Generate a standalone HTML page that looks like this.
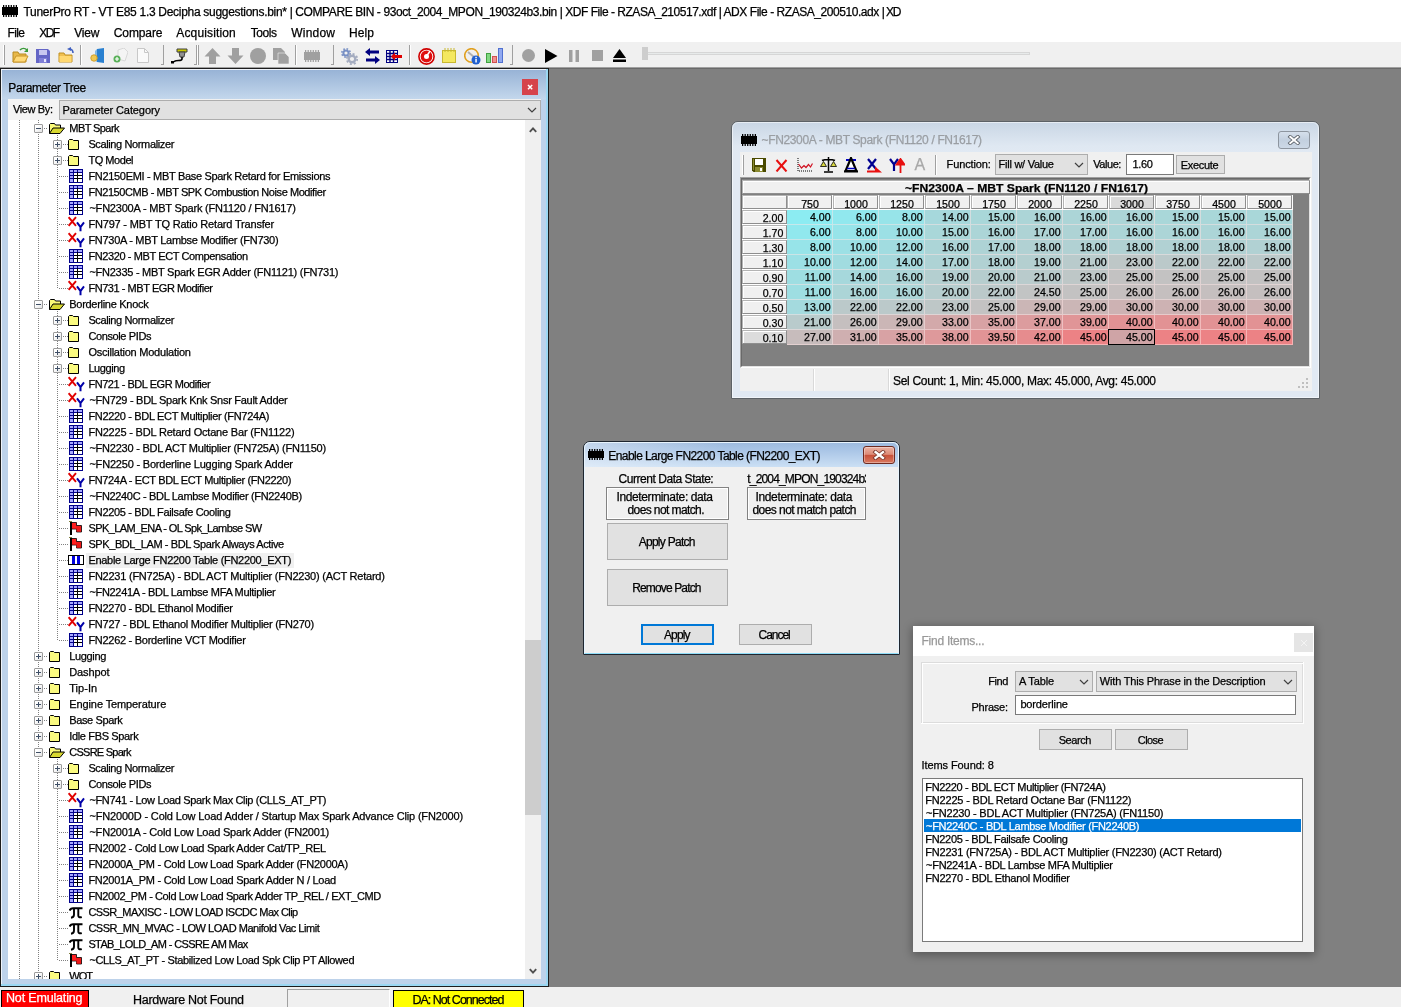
<!DOCTYPE html>
<html><head><meta charset="utf-8"><title>TunerPro RT</title><style>
html,body{margin:0;padding:0}
body{width:1401px;height:1007px;overflow:hidden;background:#808080;position:relative;font-family:"Liberation Sans",sans-serif;color:#000}
div,span,svg{position:absolute;box-sizing:border-box}
span{white-space:pre;line-height:16px;-webkit-text-stroke:.25px}
</style></head><body>
<div style="left:0;top:0;width:1401px;height:1007px;will-change:transform">
<div style="left:0px;top:0px;width:1401px;height:42px;background:#fff"></div>
<svg style="left:2px;top:5px" width="16" height="12" viewBox="0 0 16 12"><rect x="0" y="2" width="16" height="8" fill="#000"/><rect x="1.00" y="0" width="1.27" height="12" fill="#000"/><rect x="3.55" y="0" width="1.27" height="12" fill="#000"/><rect x="6.09" y="0" width="1.27" height="12" fill="#000"/><rect x="8.64" y="0" width="1.27" height="12" fill="#000"/><rect x="11.18" y="0" width="1.27" height="12" fill="#000"/><rect x="13.73" y="0" width="1.27" height="12" fill="#000"/></svg>
<span style="top:3.84px;font-size:12px;letter-spacing:-0.297px;left:23.50px;">TunerPro RT - VT E85 1.3 Decipha suggestions.bin* </span>
<span style="top:3.84px;font-size:12px;letter-spacing:-0.409px;left:289.70px;">| COMPARE BIN - 93oct_2004_MPON_190324b3.bin </span>
<span style="top:3.84px;font-size:12px;letter-spacing:-0.473px;left:559.70px;">| XDF File - RZASA_210517.xdf </span>
<span style="top:3.84px;font-size:12px;letter-spacing:-0.452px;left:718.70px;">| ADX File - RZASA_200510.adx </span>
<span style="top:3.84px;font-size:12px;letter-spacing:-1.108px;left:881.70px;">| XD</span>
<span style="top:24.84px;font-size:12px;letter-spacing:-0.615px;left:7.50px;">File</span>
<span style="top:24.84px;font-size:12px;letter-spacing:-1.650px;left:39.30px;">XDF</span>
<span style="top:24.84px;font-size:12px;letter-spacing:-0.266px;left:74.30px;">View</span>
<span style="top:24.84px;font-size:12px;letter-spacing:-0.110px;left:113.80px;">Compare</span>
<span style="top:24.84px;font-size:12px;letter-spacing:0.147px;left:176.30px;">Acquisition</span>
<span style="top:24.84px;font-size:12px;letter-spacing:-0.454px;left:250.80px;">Tools</span>
<span style="top:24.84px;font-size:12px;letter-spacing:0.202px;left:291.30px;">Window</span>
<span style="top:24.84px;font-size:12px;letter-spacing:0.104px;left:349.00px;">Help</span>
<div style="left:0px;top:42px;width:1401px;height:26px;background:#f0f0f0"></div>
<div style="left:3px;top:45px;width:1px;height:20px;background:#fff"></div>
<div style="left:4px;top:45px;width:1px;height:20px;background:#a0a0a0"></div>
<div style="left:80px;top:45px;width:1px;height:20px;background:#a0a0a0"></div>
<div style="left:81px;top:45px;width:1px;height:20px;background:#fff"></div>
<div style="left:163px;top:45px;width:1px;height:20px;background:#a0a0a0"></div>
<div style="left:161px;top:64px;width:3px;height:1px;background:#a0a0a0"></div>
<div style="left:196px;top:45px;width:1px;height:20px;background:#a0a0a0"></div>
<div style="left:194px;top:64px;width:3px;height:1px;background:#a0a0a0"></div>
<div style="left:197px;top:45px;width:1px;height:20px;background:#fff"></div>
<div style="left:198px;top:45px;width:1px;height:20px;background:#a0a0a0"></div>
<div style="left:295px;top:45px;width:1px;height:20px;background:#a0a0a0"></div>
<div style="left:296px;top:45px;width:1px;height:20px;background:#fff"></div>
<div style="left:333px;top:45px;width:1px;height:20px;background:#a0a0a0"></div>
<div style="left:331px;top:64px;width:3px;height:1px;background:#a0a0a0"></div>
<div style="left:409px;top:45px;width:1px;height:20px;background:#a0a0a0"></div>
<div style="left:410px;top:45px;width:1px;height:20px;background:#fff"></div>
<div style="left:512px;top:45px;width:1px;height:20px;background:#a0a0a0"></div>
<div style="left:510px;top:64px;width:3px;height:1px;background:#a0a0a0"></div>
<svg style="left:12px;top:47px" width="17" height="16" viewBox="0 0 17 16"><path d="M1 5h5l1 2h7v8H1z" fill="#e8b84a" stroke="#b88a20"/><path d="M1 15l3-6h12l-3 6z" fill="#ffd978" stroke="#c8962a"/><path d="M8 3c2-2 5-2 7 0" fill="none" stroke="#3a9a3a" stroke-width="1.6"/><path d="M16 1v4h-4z" fill="#3a9a3a"/></svg>
<svg style="left:36px;top:49px" width="14" height="14" viewBox="0 0 14 14"><path d="M0 0h12l2 2v12H0z" fill="#6466c6"/><rect x="3" y="1" width="8" height="5" fill="#c8c8f0"/><rect x="3" y="9" width="8" height="5" fill="#8080d8"/><rect x="8" y="10" width="2" height="3" fill="#e8e8ff"/></svg>
<svg style="left:58px;top:47px" width="17" height="16" viewBox="0 0 17 16"><path d="M1 6h5l1 2h7v7H1z" fill="#f0c050" stroke="#c09020"/><rect x="1.5" y="9" width="12" height="6" fill="#ffd870"/><path d="M11 2c2 0 4 1 4 4" fill="none" stroke="#4060c0" stroke-width="1.6"/><path d="M9 2l4-2v4z" fill="#4060c0"/></svg>
<svg style="left:90px;top:48px" width="15" height="15" viewBox="0 0 15 15"><path d="M7 1l7-1v15l-7-1z" fill="#2a80d0"/><path d="M7 1v13l-2-1V3z" fill="#80b8e8"/><circle cx="4" cy="10" r="3.2" fill="#f0c850" stroke="#d0a030"/></svg>
<svg style="left:113px;top:48px" width="15" height="15" viewBox="0 0 15 15"><path d="M5 2l6-2 4 4-3 9-7-2z" fill="#f4f4f4" stroke="#d8d8d8"/><circle cx="4" cy="11" r="3.5" fill="#58b058"/><path d="M4 9v4M2 11h4" stroke="#fff" stroke-width="1.2"/></svg>
<svg style="left:137px;top:48px" width="12" height="15" viewBox="0 0 12 15"><path d="M.5.5h7l4 4v10H.5z" fill="#fafafa" stroke="#c8c8c8"/><path d="M7.5.5v4h4" fill="none" stroke="#c8c8c8"/></svg>
<svg style="left:171px;top:47px" width="17" height="17" viewBox="0 0 17 17"><path d="M6 2h10v3H6z" fill="#c8c800" stroke="#404040"/><path d="M8 5h6l-1 5h-4z" fill="#909090" stroke="#404040"/><path d="M11 10v2c0 3-7 0-8 3" fill="none" stroke="#000" stroke-width="1.6"/><rect x="0" y="14" width="3" height="2.5" fill="#000"/></svg>
<svg style="left:204px;top:48px" width="17" height="16" viewBox="0 0 17 16"><path d="M8.5 0l8 8.5h-4.5V16h-7V8.500H.5z" fill="#a0a0a0"/></svg>
<svg style="left:227px;top:48px" width="17" height="16" viewBox="0 0 17 16"><path d="M8.5 16l8-8.500h-4.5V0h-7v7.500H.5z" fill="#a0a0a0"/></svg>
<svg style="left:250px;top:48px" width="16" height="16" viewBox="0 0 16 16"><circle cx="8" cy="8" r="8" fill="#a0a0a0"/></svg>
<svg style="left:273px;top:48px" width="16" height="16" viewBox="0 0 16 16"><path d="M0 0h8l4 4v8H0z" fill="#a0a0a0"/><path d="M5 5h7l4 4v7H5z" fill="#a0a0a0" stroke="#f0f0f0" stroke-width=".6"/></svg>
<svg style="left:304px;top:50px" width="16" height="12" viewBox="0 0 16 12"><rect x="0" y="2" width="16" height="8" fill="#a0a0a0"/><rect x="1.00" y="0" width="1.27" height="12" fill="#a0a0a0"/><rect x="3.55" y="0" width="1.27" height="12" fill="#a0a0a0"/><rect x="6.09" y="0" width="1.27" height="12" fill="#a0a0a0"/><rect x="8.64" y="0" width="1.27" height="12" fill="#a0a0a0"/><rect x="11.18" y="0" width="1.27" height="12" fill="#a0a0a0"/><rect x="13.73" y="0" width="1.27" height="12" fill="#a0a0a0"/></svg>
<svg style="left:341px;top:48px" width="17" height="17" viewBox="0 0 17 17"><circle cx="5" cy="5" r="2.600" fill="none" stroke="#7890c4" stroke-width="2"/><circle cx="5" cy="5" r="4.200" fill="none" stroke="#7890c4" stroke-width="1.600" stroke-dasharray="1.650 1.650"/><circle cx="11" cy="11" r="3.300" fill="none" stroke="#a4acc0" stroke-width="2.400"/><circle cx="11" cy="11" r="5.200" fill="none" stroke="#a4acc0" stroke-width="1.800" stroke-dasharray="2.040 2.040"/></svg>
<svg style="left:365px;top:48px" width="15" height="16" viewBox="0 0 15 16"><path d="M0 4l5-4v2.500h9v3H5V8z" fill="#000080"/><path d="M15 12l-5-4v2.500H1v3h9V16z" fill="#000080"/></svg>
<svg style="left:386px;top:50px" width="16" height="13" viewBox="0 0 16 13"><rect x=".5" y=".5" width="11" height="12" fill="#fff" stroke="#000080"/><path d="M1 3.500h10M1 6.500h10M1 9.500h10M4 1v11M7.500 1v11" stroke="#000080" stroke-width="1.4"/><path d="M5 6.500l4-4v2.500h7v3H9v2.500z" fill="#e00000"/></svg>
<svg style="left:418px;top:48px" width="17" height="17" viewBox="0 0 17 17"><circle cx="8.500" cy="8.500" r="7.600" fill="#fff" stroke="#d00000" stroke-width="1.6"/><circle cx="8.500" cy="8.500" r="4.200" fill="none" stroke="#e01010" stroke-width="3.400"/><path d="M8.500 8.500L12 3" stroke="#fff" stroke-width="1.500"/></svg>
<svg style="left:442px;top:48px" width="14" height="15" viewBox="0 0 14 15"><rect x=".5" y="2.500" width="13" height="12" fill="#f4e860" stroke="#c8b830"/><path d="M3 0v4M6 0v4M9 0v4M12 0v4" stroke="#c8b830"/></svg>
<svg style="left:464px;top:48px" width="17" height="17" viewBox="0 0 17 17"><circle cx="7.500" cy="7.500" r="6.800" fill="#f0f0f0" stroke="#e0a020" stroke-width="1.600"/><path d="M4 4l6 5" stroke="#b0b0b0" stroke-width="2"/><circle cx="12" cy="12" r="4.500" fill="#2060d0"/><rect x="11.300" y="10.800" width="1.500" height="3.700" fill="#fff"/><rect x="11.300" y="8.800" width="1.500" height="1.300" fill="#fff"/></svg>
<svg style="left:486px;top:48px" width="17" height="15" viewBox="0 0 17 15"><rect x=".5" y="5.500" width="4" height="9" fill="#80d880" stroke="#40a040"/><rect x="6.500" y="8.500" width="4" height="6" fill="#f09090" stroke="#d05050"/><rect x="12.500" y=".5" width="4" height="14" fill="#90a8f0" stroke="#5070d0"/></svg>
<svg style="left:522px;top:49px" width="13" height="13" viewBox="0 0 13 13"><circle cx="6.500" cy="6.500" r="6.500" fill="#a0a0a0"/></svg>
<svg style="left:545px;top:49px" width="13" height="14" viewBox="0 0 13 14"><path d="M0 0l12.500 7L0 14z" fill="#000"/></svg>
<svg style="left:569px;top:50px" width="10" height="12" viewBox="0 0 10 12"><rect x="0" y="0" width="3.500" height="12" fill="#a0a0a0"/><rect x="6.500" y="0" width="3.500" height="12" fill="#a0a0a0"/></svg>
<svg style="left:592px;top:50px" width="11" height="11" viewBox="0 0 11 11"><rect width="11" height="11" fill="#a0a0a0"/></svg>
<svg style="left:613px;top:49px" width="13" height="13" viewBox="0 0 13 13"><path d="M6.500 0l6.500 9H0z" fill="#000"/><rect x="0" y="10.500" width="13" height="2.500" fill="#000"/></svg>
<div style="left:647px;top:52px;width:383px;height:3px;background:#e7eaea;border:1px solid #d6d6d6"></div>
<div style="left:642px;top:47px;width:6px;height:13px;background:#cdcdcd"></div>
<div style="left:0px;top:68px;width:1401px;height:919px;background:#808080"></div>
<div style="left:0px;top:67px;width:1401px;height:1px;background:#a0a0a0"></div>
<div style="left:0px;top:68px;width:1401px;height:1px;background:#696969"></div>
<div style="left:0px;top:987px;width:1401px;height:20px;background:#f0f0f0"></div>
<div style="left:1px;top:990px;width:88px;height:18px;background:#ff0000;border:1px solid #000"></div>
<span style="top:990.17px;font-size:12.5px;letter-spacing:-0.168px;left:6.00px;color:#fff;">Not Emulating</span>
<span style="top:991.97px;font-size:12.5px;letter-spacing:-0.296px;left:133.00px;">Hardware Not Found</span>
<div style="left:287px;top:989px;width:103px;height:19px;border:1px solid #a0a0a0;border-right-color:#fff"></div>
<div style="left:393px;top:990px;width:131px;height:18px;background:#ffff00;border:1px solid #000"></div>
<span style="top:991.97px;font-size:12.5px;letter-spacing:-0.975px;left:412.40px;">DA: Not Connected</span>
<div style="left:0px;top:68px;width:549px;height:919px;background:#1c1c1c"></div>
<div style="left:1px;top:69px;width:547px;height:917px;background:#9bd7f2"></div>
<div style="left:1px;top:69px;width:545px;height:915px;background:#eef3fa"></div>
<div style="left:2px;top:70px;width:544px;height:914px;background:linear-gradient(#98b3d6 0,#c3d7ec 29px,#bdd2ea 30px)"></div>
<span style="top:79.64px;font-size:12px;letter-spacing:-0.413px;left:8.30px;">Parameter Tree</span>
<div style="left:522px;top:79px;width:16px;height:16px;background:#d6434b"></div>
<svg style="left:526px;top:83px" width="8" height="8" viewBox="0 0 8 8"><path d="M2 2l4.200 4.200M6.200 2L2 6.200" stroke="#fff" stroke-width="1.500"/></svg>
<div style="left:8px;top:99px;width:533px;height:21px;background:#f0f0f0"></div>
<div style="left:8px;top:99px;width:52px;height:21px;background:#f4f4f4"></div>
<span style="top:100.69px;font-size:11px;letter-spacing:-0.371px;left:13.00px;">View By:</span>
<div style="left:59px;top:100px;width:482px;height:20px;background:#e1e1e1;border:1px solid #adadad"></div>
<span style="top:101.69px;font-size:11px;letter-spacing:-0.091px;left:62.50px;">Parameter Category</span>
<svg style="left:527.2px;top:106.8px" width="10" height="7" viewBox="0 0 10 7"><path d="M1 1l4 4 4-4" fill="none" stroke="#404040" stroke-width="1.200"/></svg>
<div style="left:8px;top:120px;width:517px;height:859px;background:#fff"></div>
<div style="left:525px;top:120px;width:16px;height:859px;background:#f0f0f0"></div>
<svg style="left:528.5px;top:125.5px" width="8" height="7" viewBox="0 0 8 7"><path d="M.8 5.800l3.200-3.400 3.200 3.400" fill="none" stroke="#505050" stroke-width="1.900"/></svg>
<svg style="left:528.5px;top:967.5px" width="8" height="7" viewBox="0 0 8 7"><path d="M.8 1.200l3.200 3.400 3.200-3.400" fill="none" stroke="#505050" stroke-width="1.900"/></svg>
<div style="left:525px;top:640px;width:16px;height:175px;background:#cdcdcd"></div>
<div style="left:8px;top:120px;width:517px;height:859px;overflow:hidden">
<div style="left:11px;top:0px;width:1px;height:859px;background:repeating-linear-gradient(180deg,#808080 0,#808080 1px,transparent 1px,transparent 2px)"></div>
<div style="left:30px;top:0px;width:1px;height:857px;background:repeating-linear-gradient(180deg,#808080 0,#808080 1px,transparent 1px,transparent 2px)"></div>
<div style="left:49px;top:15px;width:1px;height:154px;background:repeating-linear-gradient(180deg,#808080 0,#808080 1px,transparent 1px,transparent 2px)"></div>
<div style="left:49px;top:191px;width:1px;height:330px;background:repeating-linear-gradient(180deg,#808080 0,#808080 1px,transparent 1px,transparent 2px)"></div>
<div style="left:49px;top:639px;width:1px;height:202px;background:repeating-linear-gradient(180deg,#808080 0,#808080 1px,transparent 1px,transparent 2px)"></div>
<div style="left:36px;top:8px;width:4px;height:1px;background:repeating-linear-gradient(90deg,#808080 0,#808080 1px,transparent 1px,transparent 2px)"></div>
<div style="left:26px;top:4px;width:9px;height:9px;background:linear-gradient(135deg,#fff 30%,#e2e2e2);border:1px solid #9b9b9b;border-radius:1px"></div>
<div style="left:28px;top:8px;width:5px;height:1px;background:#3f4f66"></div>
<svg style="left:41px;top:3px" width="16" height="12" viewBox="0 0 16 12"><path d="M.5 10.500v-9L1.500.5h4l1 1.500h5v3" fill="#fafa78" stroke="#000"/><path d="M.5 10.500L4 5h11.500L11 10.500z" fill="#d8d830" stroke="#000"/></svg>
<span style="top:0.19px;font-size:11px;letter-spacing:-0.577px;left:61.30px;">MBT Spark</span>
<div style="left:55px;top:24px;width:5px;height:1px;background:repeating-linear-gradient(90deg,#808080 0,#808080 1px,transparent 1px,transparent 2px)"></div>
<div style="left:45px;top:20px;width:9px;height:9px;background:linear-gradient(135deg,#fff 30%,#e2e2e2);border:1px solid #9b9b9b;border-radius:1px"></div>
<div style="left:47px;top:24px;width:5px;height:1px;background:#3f4f66"></div>
<div style="left:49px;top:22px;width:1px;height:5px;background:#3f4f66"></div>
<svg style="left:60px;top:19px" width="11" height="11" viewBox="0 0 11 11"><path d="M.5 1.500L1.500.5h3l1 1h5v9H.5z" fill="#fafa80" stroke="#000"/></svg>
<span style="top:16.19px;font-size:11px;letter-spacing:-0.377px;left:80.40px;">Scaling Normalizer</span>
<div style="left:55px;top:40px;width:5px;height:1px;background:repeating-linear-gradient(90deg,#808080 0,#808080 1px,transparent 1px,transparent 2px)"></div>
<div style="left:45px;top:36px;width:9px;height:9px;background:linear-gradient(135deg,#fff 30%,#e2e2e2);border:1px solid #9b9b9b;border-radius:1px"></div>
<div style="left:47px;top:40px;width:5px;height:1px;background:#3f4f66"></div>
<div style="left:49px;top:38px;width:1px;height:5px;background:#3f4f66"></div>
<svg style="left:60px;top:35px" width="11" height="11" viewBox="0 0 11 11"><path d="M.5 1.500L1.500.5h3l1 1h5v9H.5z" fill="#fafa80" stroke="#000"/></svg>
<span style="top:32.19px;font-size:11px;letter-spacing:-0.457px;left:80.40px;">TQ Model</span>
<div style="left:51px;top:56px;width:9px;height:1px;background:repeating-linear-gradient(90deg,#808080 0,#808080 1px,transparent 1px,transparent 2px)"></div>
<svg style="left:61px;top:49px" width="14" height="14" viewBox="0 0 14 14" shape-rendering="crispEdges"><rect width="14" height="14" fill="#00008b"/><rect x="1" y="1" width="3" height="2" fill="#a8a8ff"/><rect x="5" y="1" width="3" height="2" fill="#a8a8ff"/><rect x="9" y="1" width="4" height="2" fill="#a8a8ff"/><rect x="1" y="4" width="3" height="2" fill="#a8a8ff"/><rect x="5" y="4" width="3" height="2" fill="#fff"/><rect x="9" y="4" width="4" height="2" fill="#fff"/><rect x="1" y="7" width="3" height="2" fill="#a8a8ff"/><rect x="5" y="7" width="3" height="2" fill="#fff"/><rect x="9" y="7" width="4" height="2" fill="#fff"/><rect x="1" y="10" width="3" height="3" fill="#a8a8ff"/><rect x="5" y="10" width="3" height="3" fill="#fff"/><rect x="9" y="10" width="4" height="3" fill="#fff"/><rect x="8" y="3" width="1" height="10" fill="#000"/><rect x="5" y="6" width="8" height="1" fill="#000"/><rect x="5" y="9" width="8" height="1" fill="#000"/></svg>
<span style="top:48.19px;font-size:11px;letter-spacing:-0.314px;left:80.40px;">FN2150EMI - MBT Base Spark Retard for Emissions</span>
<div style="left:51px;top:72px;width:9px;height:1px;background:repeating-linear-gradient(90deg,#808080 0,#808080 1px,transparent 1px,transparent 2px)"></div>
<svg style="left:61px;top:65px" width="14" height="14" viewBox="0 0 14 14" shape-rendering="crispEdges"><rect width="14" height="14" fill="#00008b"/><rect x="1" y="1" width="3" height="2" fill="#a8a8ff"/><rect x="5" y="1" width="3" height="2" fill="#a8a8ff"/><rect x="9" y="1" width="4" height="2" fill="#a8a8ff"/><rect x="1" y="4" width="3" height="2" fill="#a8a8ff"/><rect x="5" y="4" width="3" height="2" fill="#fff"/><rect x="9" y="4" width="4" height="2" fill="#fff"/><rect x="1" y="7" width="3" height="2" fill="#a8a8ff"/><rect x="5" y="7" width="3" height="2" fill="#fff"/><rect x="9" y="7" width="4" height="2" fill="#fff"/><rect x="1" y="10" width="3" height="3" fill="#a8a8ff"/><rect x="5" y="10" width="3" height="3" fill="#fff"/><rect x="9" y="10" width="4" height="3" fill="#fff"/><rect x="8" y="3" width="1" height="10" fill="#000"/><rect x="5" y="6" width="8" height="1" fill="#000"/><rect x="5" y="9" width="8" height="1" fill="#000"/></svg>
<span style="top:64.19px;font-size:11px;letter-spacing:-0.429px;left:80.40px;">FN2150CMB - MBT SPK Combustion Noise Modifier</span>
<div style="left:51px;top:88px;width:9px;height:1px;background:repeating-linear-gradient(90deg,#808080 0,#808080 1px,transparent 1px,transparent 2px)"></div>
<svg style="left:61px;top:81px" width="14" height="14" viewBox="0 0 14 14" shape-rendering="crispEdges"><rect width="14" height="14" fill="#00008b"/><rect x="1" y="1" width="3" height="2" fill="#a8a8ff"/><rect x="5" y="1" width="3" height="2" fill="#a8a8ff"/><rect x="9" y="1" width="4" height="2" fill="#a8a8ff"/><rect x="1" y="4" width="3" height="2" fill="#a8a8ff"/><rect x="5" y="4" width="3" height="2" fill="#fff"/><rect x="9" y="4" width="4" height="2" fill="#fff"/><rect x="1" y="7" width="3" height="2" fill="#a8a8ff"/><rect x="5" y="7" width="3" height="2" fill="#fff"/><rect x="9" y="7" width="4" height="2" fill="#fff"/><rect x="1" y="10" width="3" height="3" fill="#a8a8ff"/><rect x="5" y="10" width="3" height="3" fill="#fff"/><rect x="9" y="10" width="4" height="3" fill="#fff"/><rect x="8" y="3" width="1" height="10" fill="#000"/><rect x="5" y="6" width="8" height="1" fill="#000"/><rect x="5" y="9" width="8" height="1" fill="#000"/></svg>
<span style="top:80.19px;font-size:11px;letter-spacing:-0.202px;left:81.40px;">~FN2300A - MBT Spark (FN1120 / FN1617)</span>
<div style="left:51px;top:104px;width:9px;height:1px;background:repeating-linear-gradient(90deg,#808080 0,#808080 1px,transparent 1px,transparent 2px)"></div>
<svg style="left:60px;top:96px" width="17" height="16" viewBox="0 0 17 16"><path d="M.6 1.200l7.400 8.600M8 1.200L.6 9.800" stroke="#e00000" stroke-width="1.900" fill="none"/><path d="M9 6.400l3.500 4.600L16 6.400M12.500 11v4.300" stroke="#0000a8" stroke-width="2" fill="none"/></svg>
<span style="top:96.19px;font-size:11px;letter-spacing:-0.182px;left:80.40px;">FN797 - MBT TQ Ratio Retard Transfer</span>
<div style="left:51px;top:120px;width:9px;height:1px;background:repeating-linear-gradient(90deg,#808080 0,#808080 1px,transparent 1px,transparent 2px)"></div>
<svg style="left:60px;top:112px" width="17" height="16" viewBox="0 0 17 16"><path d="M.6 1.200l7.400 8.600M8 1.200L.6 9.800" stroke="#e00000" stroke-width="1.900" fill="none"/><path d="M9 6.400l3.500 4.600L16 6.400M12.500 11v4.300" stroke="#0000a8" stroke-width="2" fill="none"/></svg>
<span style="top:112.19px;font-size:11px;letter-spacing:-0.289px;left:80.40px;">FN730A - MBT Lambse Modifier (FN730)</span>
<div style="left:51px;top:136px;width:9px;height:1px;background:repeating-linear-gradient(90deg,#808080 0,#808080 1px,transparent 1px,transparent 2px)"></div>
<svg style="left:61px;top:129px" width="14" height="14" viewBox="0 0 14 14" shape-rendering="crispEdges"><rect width="14" height="14" fill="#00008b"/><rect x="1" y="1" width="3" height="2" fill="#a8a8ff"/><rect x="5" y="1" width="3" height="2" fill="#a8a8ff"/><rect x="9" y="1" width="4" height="2" fill="#a8a8ff"/><rect x="1" y="4" width="3" height="2" fill="#a8a8ff"/><rect x="5" y="4" width="3" height="2" fill="#fff"/><rect x="9" y="4" width="4" height="2" fill="#fff"/><rect x="1" y="7" width="3" height="2" fill="#a8a8ff"/><rect x="5" y="7" width="3" height="2" fill="#fff"/><rect x="9" y="7" width="4" height="2" fill="#fff"/><rect x="1" y="10" width="3" height="3" fill="#a8a8ff"/><rect x="5" y="10" width="3" height="3" fill="#fff"/><rect x="9" y="10" width="4" height="3" fill="#fff"/><rect x="8" y="3" width="1" height="10" fill="#000"/><rect x="5" y="6" width="8" height="1" fill="#000"/><rect x="5" y="9" width="8" height="1" fill="#000"/></svg>
<span style="top:128.19px;font-size:11px;letter-spacing:-0.392px;left:80.40px;">FN2320 - MBT ECT Compensation</span>
<div style="left:51px;top:152px;width:9px;height:1px;background:repeating-linear-gradient(90deg,#808080 0,#808080 1px,transparent 1px,transparent 2px)"></div>
<svg style="left:61px;top:145px" width="14" height="14" viewBox="0 0 14 14" shape-rendering="crispEdges"><rect width="14" height="14" fill="#00008b"/><rect x="1" y="1" width="3" height="2" fill="#a8a8ff"/><rect x="5" y="1" width="3" height="2" fill="#a8a8ff"/><rect x="9" y="1" width="4" height="2" fill="#a8a8ff"/><rect x="1" y="4" width="3" height="2" fill="#a8a8ff"/><rect x="5" y="4" width="3" height="2" fill="#fff"/><rect x="9" y="4" width="4" height="2" fill="#fff"/><rect x="1" y="7" width="3" height="2" fill="#a8a8ff"/><rect x="5" y="7" width="3" height="2" fill="#fff"/><rect x="9" y="7" width="4" height="2" fill="#fff"/><rect x="1" y="10" width="3" height="3" fill="#a8a8ff"/><rect x="5" y="10" width="3" height="3" fill="#fff"/><rect x="9" y="10" width="4" height="3" fill="#fff"/><rect x="8" y="3" width="1" height="10" fill="#000"/><rect x="5" y="6" width="8" height="1" fill="#000"/><rect x="5" y="9" width="8" height="1" fill="#000"/></svg>
<span style="top:144.19px;font-size:11px;letter-spacing:-0.263px;left:81.40px;">~FN2335 - MBT Spark EGR Adder (FN1121) (FN731)</span>
<div style="left:51px;top:168px;width:9px;height:1px;background:repeating-linear-gradient(90deg,#808080 0,#808080 1px,transparent 1px,transparent 2px)"></div>
<svg style="left:60px;top:160px" width="17" height="16" viewBox="0 0 17 16"><path d="M.6 1.200l7.400 8.600M8 1.200L.6 9.800" stroke="#e00000" stroke-width="1.900" fill="none"/><path d="M9 6.400l3.500 4.600L16 6.400M12.500 11v4.300" stroke="#0000a8" stroke-width="2" fill="none"/></svg>
<span style="top:160.19px;font-size:11px;letter-spacing:-0.447px;left:80.40px;">FN731 - MBT EGR Modifier</span>
<div style="left:36px;top:184px;width:4px;height:1px;background:repeating-linear-gradient(90deg,#808080 0,#808080 1px,transparent 1px,transparent 2px)"></div>
<div style="left:26px;top:180px;width:9px;height:9px;background:linear-gradient(135deg,#fff 30%,#e2e2e2);border:1px solid #9b9b9b;border-radius:1px"></div>
<div style="left:28px;top:184px;width:5px;height:1px;background:#3f4f66"></div>
<svg style="left:41px;top:179px" width="16" height="12" viewBox="0 0 16 12"><path d="M.5 10.500v-9L1.500.5h4l1 1.500h5v3" fill="#fafa78" stroke="#000"/><path d="M.5 10.500L4 5h11.500L11 10.500z" fill="#d8d830" stroke="#000"/></svg>
<span style="top:176.19px;font-size:11px;letter-spacing:-0.292px;left:61.30px;">Borderline Knock</span>
<div style="left:55px;top:200px;width:5px;height:1px;background:repeating-linear-gradient(90deg,#808080 0,#808080 1px,transparent 1px,transparent 2px)"></div>
<div style="left:45px;top:196px;width:9px;height:9px;background:linear-gradient(135deg,#fff 30%,#e2e2e2);border:1px solid #9b9b9b;border-radius:1px"></div>
<div style="left:47px;top:200px;width:5px;height:1px;background:#3f4f66"></div>
<div style="left:49px;top:198px;width:1px;height:5px;background:#3f4f66"></div>
<svg style="left:60px;top:195px" width="11" height="11" viewBox="0 0 11 11"><path d="M.5 1.500L1.500.5h3l1 1h5v9H.5z" fill="#fafa80" stroke="#000"/></svg>
<span style="top:192.19px;font-size:11px;letter-spacing:-0.377px;left:80.40px;">Scaling Normalizer</span>
<div style="left:55px;top:216px;width:5px;height:1px;background:repeating-linear-gradient(90deg,#808080 0,#808080 1px,transparent 1px,transparent 2px)"></div>
<div style="left:45px;top:212px;width:9px;height:9px;background:linear-gradient(135deg,#fff 30%,#e2e2e2);border:1px solid #9b9b9b;border-radius:1px"></div>
<div style="left:47px;top:216px;width:5px;height:1px;background:#3f4f66"></div>
<div style="left:49px;top:214px;width:1px;height:5px;background:#3f4f66"></div>
<svg style="left:60px;top:211px" width="11" height="11" viewBox="0 0 11 11"><path d="M.5 1.500L1.500.5h3l1 1h5v9H.5z" fill="#fafa80" stroke="#000"/></svg>
<span style="top:208.19px;font-size:11px;letter-spacing:-0.379px;left:80.40px;">Console PIDs</span>
<div style="left:55px;top:232px;width:5px;height:1px;background:repeating-linear-gradient(90deg,#808080 0,#808080 1px,transparent 1px,transparent 2px)"></div>
<div style="left:45px;top:228px;width:9px;height:9px;background:linear-gradient(135deg,#fff 30%,#e2e2e2);border:1px solid #9b9b9b;border-radius:1px"></div>
<div style="left:47px;top:232px;width:5px;height:1px;background:#3f4f66"></div>
<div style="left:49px;top:230px;width:1px;height:5px;background:#3f4f66"></div>
<svg style="left:60px;top:227px" width="11" height="11" viewBox="0 0 11 11"><path d="M.5 1.500L1.500.5h3l1 1h5v9H.5z" fill="#fafa80" stroke="#000"/></svg>
<span style="top:224.19px;font-size:11px;letter-spacing:-0.239px;left:80.40px;">Oscillation Modulation</span>
<div style="left:55px;top:248px;width:5px;height:1px;background:repeating-linear-gradient(90deg,#808080 0,#808080 1px,transparent 1px,transparent 2px)"></div>
<div style="left:45px;top:244px;width:9px;height:9px;background:linear-gradient(135deg,#fff 30%,#e2e2e2);border:1px solid #9b9b9b;border-radius:1px"></div>
<div style="left:47px;top:248px;width:5px;height:1px;background:#3f4f66"></div>
<div style="left:49px;top:246px;width:1px;height:5px;background:#3f4f66"></div>
<svg style="left:60px;top:243px" width="11" height="11" viewBox="0 0 11 11"><path d="M.5 1.500L1.500.5h3l1 1h5v9H.5z" fill="#fafa80" stroke="#000"/></svg>
<span style="top:240.19px;font-size:11px;letter-spacing:-0.409px;left:80.40px;">Lugging</span>
<div style="left:51px;top:264px;width:9px;height:1px;background:repeating-linear-gradient(90deg,#808080 0,#808080 1px,transparent 1px,transparent 2px)"></div>
<svg style="left:60px;top:256px" width="17" height="16" viewBox="0 0 17 16"><path d="M.6 1.200l7.400 8.600M8 1.200L.6 9.800" stroke="#e00000" stroke-width="1.900" fill="none"/><path d="M9 6.400l3.500 4.600L16 6.400M12.500 11v4.300" stroke="#0000a8" stroke-width="2" fill="none"/></svg>
<span style="top:256.19px;font-size:11px;letter-spacing:-0.463px;left:80.40px;">FN721 - BDL EGR Modifier</span>
<div style="left:51px;top:280px;width:9px;height:1px;background:repeating-linear-gradient(90deg,#808080 0,#808080 1px,transparent 1px,transparent 2px)"></div>
<svg style="left:60px;top:272px" width="17" height="16" viewBox="0 0 17 16"><path d="M.6 1.200l7.400 8.600M8 1.200L.6 9.800" stroke="#e00000" stroke-width="1.900" fill="none"/><path d="M9 6.400l3.500 4.600L16 6.400M12.500 11v4.300" stroke="#0000a8" stroke-width="2" fill="none"/></svg>
<span style="top:272.19px;font-size:11px;letter-spacing:-0.279px;left:81.40px;">~FN729 - BDL Spark Knk Snsr Fault Adder</span>
<div style="left:51px;top:296px;width:9px;height:1px;background:repeating-linear-gradient(90deg,#808080 0,#808080 1px,transparent 1px,transparent 2px)"></div>
<svg style="left:61px;top:289px" width="14" height="14" viewBox="0 0 14 14" shape-rendering="crispEdges"><rect width="14" height="14" fill="#00008b"/><rect x="1" y="1" width="3" height="2" fill="#a8a8ff"/><rect x="5" y="1" width="3" height="2" fill="#a8a8ff"/><rect x="9" y="1" width="4" height="2" fill="#a8a8ff"/><rect x="1" y="4" width="3" height="2" fill="#a8a8ff"/><rect x="5" y="4" width="3" height="2" fill="#fff"/><rect x="9" y="4" width="4" height="2" fill="#fff"/><rect x="1" y="7" width="3" height="2" fill="#a8a8ff"/><rect x="5" y="7" width="3" height="2" fill="#fff"/><rect x="9" y="7" width="4" height="2" fill="#fff"/><rect x="1" y="10" width="3" height="3" fill="#a8a8ff"/><rect x="5" y="10" width="3" height="3" fill="#fff"/><rect x="9" y="10" width="4" height="3" fill="#fff"/><rect x="8" y="3" width="1" height="10" fill="#000"/><rect x="5" y="6" width="8" height="1" fill="#000"/><rect x="5" y="9" width="8" height="1" fill="#000"/></svg>
<span style="top:288.19px;font-size:11px;letter-spacing:-0.330px;left:80.40px;">FN2220 - BDL ECT Multiplier (FN724A)</span>
<div style="left:51px;top:312px;width:9px;height:1px;background:repeating-linear-gradient(90deg,#808080 0,#808080 1px,transparent 1px,transparent 2px)"></div>
<svg style="left:61px;top:305px" width="14" height="14" viewBox="0 0 14 14" shape-rendering="crispEdges"><rect width="14" height="14" fill="#00008b"/><rect x="1" y="1" width="3" height="2" fill="#a8a8ff"/><rect x="5" y="1" width="3" height="2" fill="#a8a8ff"/><rect x="9" y="1" width="4" height="2" fill="#a8a8ff"/><rect x="1" y="4" width="3" height="2" fill="#a8a8ff"/><rect x="5" y="4" width="3" height="2" fill="#fff"/><rect x="9" y="4" width="4" height="2" fill="#fff"/><rect x="1" y="7" width="3" height="2" fill="#a8a8ff"/><rect x="5" y="7" width="3" height="2" fill="#fff"/><rect x="9" y="7" width="4" height="2" fill="#fff"/><rect x="1" y="10" width="3" height="3" fill="#a8a8ff"/><rect x="5" y="10" width="3" height="3" fill="#fff"/><rect x="9" y="10" width="4" height="3" fill="#fff"/><rect x="8" y="3" width="1" height="10" fill="#000"/><rect x="5" y="6" width="8" height="1" fill="#000"/><rect x="5" y="9" width="8" height="1" fill="#000"/></svg>
<span style="top:304.19px;font-size:11px;letter-spacing:-0.189px;left:80.40px;">FN2225 - BDL Retard Octane Bar (FN1122)</span>
<div style="left:51px;top:328px;width:9px;height:1px;background:repeating-linear-gradient(90deg,#808080 0,#808080 1px,transparent 1px,transparent 2px)"></div>
<svg style="left:61px;top:321px" width="14" height="14" viewBox="0 0 14 14" shape-rendering="crispEdges"><rect width="14" height="14" fill="#00008b"/><rect x="1" y="1" width="3" height="2" fill="#a8a8ff"/><rect x="5" y="1" width="3" height="2" fill="#a8a8ff"/><rect x="9" y="1" width="4" height="2" fill="#a8a8ff"/><rect x="1" y="4" width="3" height="2" fill="#a8a8ff"/><rect x="5" y="4" width="3" height="2" fill="#fff"/><rect x="9" y="4" width="4" height="2" fill="#fff"/><rect x="1" y="7" width="3" height="2" fill="#a8a8ff"/><rect x="5" y="7" width="3" height="2" fill="#fff"/><rect x="9" y="7" width="4" height="2" fill="#fff"/><rect x="1" y="10" width="3" height="3" fill="#a8a8ff"/><rect x="5" y="10" width="3" height="3" fill="#fff"/><rect x="9" y="10" width="4" height="3" fill="#fff"/><rect x="8" y="3" width="1" height="10" fill="#000"/><rect x="5" y="6" width="8" height="1" fill="#000"/><rect x="5" y="9" width="8" height="1" fill="#000"/></svg>
<span style="top:320.19px;font-size:11px;letter-spacing:-0.231px;left:81.40px;">~FN2230 - BDL ACT Multiplier (FN725A) (FN1150)</span>
<div style="left:51px;top:344px;width:9px;height:1px;background:repeating-linear-gradient(90deg,#808080 0,#808080 1px,transparent 1px,transparent 2px)"></div>
<svg style="left:61px;top:337px" width="14" height="14" viewBox="0 0 14 14" shape-rendering="crispEdges"><rect width="14" height="14" fill="#00008b"/><rect x="1" y="1" width="3" height="2" fill="#a8a8ff"/><rect x="5" y="1" width="3" height="2" fill="#a8a8ff"/><rect x="9" y="1" width="4" height="2" fill="#a8a8ff"/><rect x="1" y="4" width="3" height="2" fill="#a8a8ff"/><rect x="5" y="4" width="3" height="2" fill="#fff"/><rect x="9" y="4" width="4" height="2" fill="#fff"/><rect x="1" y="7" width="3" height="2" fill="#a8a8ff"/><rect x="5" y="7" width="3" height="2" fill="#fff"/><rect x="9" y="7" width="4" height="2" fill="#fff"/><rect x="1" y="10" width="3" height="3" fill="#a8a8ff"/><rect x="5" y="10" width="3" height="3" fill="#fff"/><rect x="9" y="10" width="4" height="3" fill="#fff"/><rect x="8" y="3" width="1" height="10" fill="#000"/><rect x="5" y="6" width="8" height="1" fill="#000"/><rect x="5" y="9" width="8" height="1" fill="#000"/></svg>
<span style="top:336.19px;font-size:11px;letter-spacing:-0.197px;left:81.40px;">~FN2250 - Borderline Lugging Spark Adder</span>
<div style="left:51px;top:360px;width:9px;height:1px;background:repeating-linear-gradient(90deg,#808080 0,#808080 1px,transparent 1px,transparent 2px)"></div>
<svg style="left:60px;top:352px" width="17" height="16" viewBox="0 0 17 16"><path d="M.6 1.200l7.400 8.600M8 1.200L.6 9.800" stroke="#e00000" stroke-width="1.900" fill="none"/><path d="M9 6.400l3.500 4.600L16 6.400M12.500 11v4.300" stroke="#0000a8" stroke-width="2" fill="none"/></svg>
<span style="top:352.19px;font-size:11px;letter-spacing:-0.354px;left:80.40px;">FN724A - ECT BDL ECT Multiplier (FN2220)</span>
<div style="left:51px;top:376px;width:9px;height:1px;background:repeating-linear-gradient(90deg,#808080 0,#808080 1px,transparent 1px,transparent 2px)"></div>
<svg style="left:61px;top:369px" width="14" height="14" viewBox="0 0 14 14" shape-rendering="crispEdges"><rect width="14" height="14" fill="#00008b"/><rect x="1" y="1" width="3" height="2" fill="#a8a8ff"/><rect x="5" y="1" width="3" height="2" fill="#a8a8ff"/><rect x="9" y="1" width="4" height="2" fill="#a8a8ff"/><rect x="1" y="4" width="3" height="2" fill="#a8a8ff"/><rect x="5" y="4" width="3" height="2" fill="#fff"/><rect x="9" y="4" width="4" height="2" fill="#fff"/><rect x="1" y="7" width="3" height="2" fill="#a8a8ff"/><rect x="5" y="7" width="3" height="2" fill="#fff"/><rect x="9" y="7" width="4" height="2" fill="#fff"/><rect x="1" y="10" width="3" height="3" fill="#a8a8ff"/><rect x="5" y="10" width="3" height="3" fill="#fff"/><rect x="9" y="10" width="4" height="3" fill="#fff"/><rect x="8" y="3" width="1" height="10" fill="#000"/><rect x="5" y="6" width="8" height="1" fill="#000"/><rect x="5" y="9" width="8" height="1" fill="#000"/></svg>
<span style="top:368.19px;font-size:11px;letter-spacing:-0.326px;left:81.40px;">~FN2240C - BDL Lambse Modifier (FN2240B)</span>
<div style="left:51px;top:392px;width:9px;height:1px;background:repeating-linear-gradient(90deg,#808080 0,#808080 1px,transparent 1px,transparent 2px)"></div>
<svg style="left:61px;top:385px" width="14" height="14" viewBox="0 0 14 14" shape-rendering="crispEdges"><rect width="14" height="14" fill="#00008b"/><rect x="1" y="1" width="3" height="2" fill="#a8a8ff"/><rect x="5" y="1" width="3" height="2" fill="#a8a8ff"/><rect x="9" y="1" width="4" height="2" fill="#a8a8ff"/><rect x="1" y="4" width="3" height="2" fill="#a8a8ff"/><rect x="5" y="4" width="3" height="2" fill="#fff"/><rect x="9" y="4" width="4" height="2" fill="#fff"/><rect x="1" y="7" width="3" height="2" fill="#a8a8ff"/><rect x="5" y="7" width="3" height="2" fill="#fff"/><rect x="9" y="7" width="4" height="2" fill="#fff"/><rect x="1" y="10" width="3" height="3" fill="#a8a8ff"/><rect x="5" y="10" width="3" height="3" fill="#fff"/><rect x="9" y="10" width="4" height="3" fill="#fff"/><rect x="8" y="3" width="1" height="10" fill="#000"/><rect x="5" y="6" width="8" height="1" fill="#000"/><rect x="5" y="9" width="8" height="1" fill="#000"/></svg>
<span style="top:384.19px;font-size:11px;letter-spacing:-0.330px;left:80.40px;">FN2205 - BDL Failsafe Cooling</span>
<div style="left:51px;top:408px;width:9px;height:1px;background:repeating-linear-gradient(90deg,#808080 0,#808080 1px,transparent 1px,transparent 2px)"></div>
<svg style="left:61px;top:401px" width="14" height="14" viewBox="0 0 14 14"><rect x="0" y="0" width="3" height="1" fill="#808040"/><rect x="1" y="1" width="2" height="13" fill="#000"/><path d="M3 1.500h4.500v3h5v6.500h-5v-3H3z" fill="#f01818" stroke="#000" stroke-width=".8"/><rect x="3" y="2" width="4" height="5.500" fill="#ff2020"/><rect x="7.500" y="5" width="4.500" height="5.500" fill="#ee1818"/></svg>
<span style="top:400.19px;font-size:11px;letter-spacing:-0.591px;left:80.40px;">SPK_LAM_ENA - OL Spk_Lambse SW</span>
<div style="left:51px;top:424px;width:9px;height:1px;background:repeating-linear-gradient(90deg,#808080 0,#808080 1px,transparent 1px,transparent 2px)"></div>
<svg style="left:61px;top:417px" width="14" height="14" viewBox="0 0 14 14"><rect x="0" y="0" width="3" height="1" fill="#808040"/><rect x="1" y="1" width="2" height="13" fill="#000"/><path d="M3 1.500h4.500v3h5v6.500h-5v-3H3z" fill="#f01818" stroke="#000" stroke-width=".8"/><rect x="3" y="2" width="4" height="5.500" fill="#ff2020"/><rect x="7.500" y="5" width="4.500" height="5.500" fill="#ee1818"/></svg>
<span style="top:416.19px;font-size:11px;letter-spacing:-0.409px;left:80.40px;">SPK_BDL_LAM - BDL Spark Always Active</span>
<div style="left:51px;top:440px;width:9px;height:1px;background:repeating-linear-gradient(90deg,#808080 0,#808080 1px,transparent 1px,transparent 2px)"></div>
<svg style="left:60px;top:435px" width="16" height="10" viewBox="0 0 16 10" shape-rendering="crispEdges"><rect x="0" y="0" width="16" height="10" fill="#000"/><rect x="1" y="1" width="14" height="8" fill="#fff"/><rect x="4" y="1" width="3" height="8" fill="#0000e0"/><rect x="9" y="1" width="3" height="8" fill="#0000e0"/></svg>
<div style="left:78px;top:433px;width:208.39999999999998px;height:15px;background:#f0f0f0"></div>
<span style="top:432.19px;font-size:11px;letter-spacing:-0.292px;left:80.40px;">Enable Large FN2200 Table (FN2200_EXT)</span>
<div style="left:51px;top:456px;width:9px;height:1px;background:repeating-linear-gradient(90deg,#808080 0,#808080 1px,transparent 1px,transparent 2px)"></div>
<svg style="left:61px;top:449px" width="14" height="14" viewBox="0 0 14 14" shape-rendering="crispEdges"><rect width="14" height="14" fill="#00008b"/><rect x="1" y="1" width="3" height="2" fill="#a8a8ff"/><rect x="5" y="1" width="3" height="2" fill="#a8a8ff"/><rect x="9" y="1" width="4" height="2" fill="#a8a8ff"/><rect x="1" y="4" width="3" height="2" fill="#a8a8ff"/><rect x="5" y="4" width="3" height="2" fill="#fff"/><rect x="9" y="4" width="4" height="2" fill="#fff"/><rect x="1" y="7" width="3" height="2" fill="#a8a8ff"/><rect x="5" y="7" width="3" height="2" fill="#fff"/><rect x="9" y="7" width="4" height="2" fill="#fff"/><rect x="1" y="10" width="3" height="3" fill="#a8a8ff"/><rect x="5" y="10" width="3" height="3" fill="#fff"/><rect x="9" y="10" width="4" height="3" fill="#fff"/><rect x="8" y="3" width="1" height="10" fill="#000"/><rect x="5" y="6" width="8" height="1" fill="#000"/><rect x="5" y="9" width="8" height="1" fill="#000"/></svg>
<span style="top:448.19px;font-size:11px;letter-spacing:-0.232px;left:80.40px;">FN2231 (FN725A) - BDL ACT Multiplier (FN2230) (ACT Retard)</span>
<div style="left:51px;top:472px;width:9px;height:1px;background:repeating-linear-gradient(90deg,#808080 0,#808080 1px,transparent 1px,transparent 2px)"></div>
<svg style="left:61px;top:465px" width="14" height="14" viewBox="0 0 14 14" shape-rendering="crispEdges"><rect width="14" height="14" fill="#00008b"/><rect x="1" y="1" width="3" height="2" fill="#a8a8ff"/><rect x="5" y="1" width="3" height="2" fill="#a8a8ff"/><rect x="9" y="1" width="4" height="2" fill="#a8a8ff"/><rect x="1" y="4" width="3" height="2" fill="#a8a8ff"/><rect x="5" y="4" width="3" height="2" fill="#fff"/><rect x="9" y="4" width="4" height="2" fill="#fff"/><rect x="1" y="7" width="3" height="2" fill="#a8a8ff"/><rect x="5" y="7" width="3" height="2" fill="#fff"/><rect x="9" y="7" width="4" height="2" fill="#fff"/><rect x="1" y="10" width="3" height="3" fill="#a8a8ff"/><rect x="5" y="10" width="3" height="3" fill="#fff"/><rect x="9" y="10" width="4" height="3" fill="#fff"/><rect x="8" y="3" width="1" height="10" fill="#000"/><rect x="5" y="6" width="8" height="1" fill="#000"/><rect x="5" y="9" width="8" height="1" fill="#000"/></svg>
<span style="top:464.19px;font-size:11px;letter-spacing:-0.314px;left:81.40px;">~FN2241A - BDL Lambse MFA Multiplier</span>
<div style="left:51px;top:488px;width:9px;height:1px;background:repeating-linear-gradient(90deg,#808080 0,#808080 1px,transparent 1px,transparent 2px)"></div>
<svg style="left:61px;top:481px" width="14" height="14" viewBox="0 0 14 14" shape-rendering="crispEdges"><rect width="14" height="14" fill="#00008b"/><rect x="1" y="1" width="3" height="2" fill="#a8a8ff"/><rect x="5" y="1" width="3" height="2" fill="#a8a8ff"/><rect x="9" y="1" width="4" height="2" fill="#a8a8ff"/><rect x="1" y="4" width="3" height="2" fill="#a8a8ff"/><rect x="5" y="4" width="3" height="2" fill="#fff"/><rect x="9" y="4" width="4" height="2" fill="#fff"/><rect x="1" y="7" width="3" height="2" fill="#a8a8ff"/><rect x="5" y="7" width="3" height="2" fill="#fff"/><rect x="9" y="7" width="4" height="2" fill="#fff"/><rect x="1" y="10" width="3" height="3" fill="#a8a8ff"/><rect x="5" y="10" width="3" height="3" fill="#fff"/><rect x="9" y="10" width="4" height="3" fill="#fff"/><rect x="8" y="3" width="1" height="10" fill="#000"/><rect x="5" y="6" width="8" height="1" fill="#000"/><rect x="5" y="9" width="8" height="1" fill="#000"/></svg>
<span style="top:480.19px;font-size:11px;letter-spacing:-0.280px;left:80.40px;">FN2270 - BDL Ethanol Modifier</span>
<div style="left:51px;top:504px;width:9px;height:1px;background:repeating-linear-gradient(90deg,#808080 0,#808080 1px,transparent 1px,transparent 2px)"></div>
<svg style="left:60px;top:496px" width="17" height="16" viewBox="0 0 17 16"><path d="M.6 1.200l7.400 8.600M8 1.200L.6 9.800" stroke="#e00000" stroke-width="1.900" fill="none"/><path d="M9 6.400l3.500 4.600L16 6.400M12.500 11v4.300" stroke="#0000a8" stroke-width="2" fill="none"/></svg>
<span style="top:496.19px;font-size:11px;letter-spacing:-0.241px;left:80.40px;">FN727 - BDL Ethanol Modifier Multiplier (FN270)</span>
<div style="left:51px;top:520px;width:9px;height:1px;background:repeating-linear-gradient(90deg,#808080 0,#808080 1px,transparent 1px,transparent 2px)"></div>
<svg style="left:61px;top:513px" width="14" height="14" viewBox="0 0 14 14" shape-rendering="crispEdges"><rect width="14" height="14" fill="#00008b"/><rect x="1" y="1" width="3" height="2" fill="#a8a8ff"/><rect x="5" y="1" width="3" height="2" fill="#a8a8ff"/><rect x="9" y="1" width="4" height="2" fill="#a8a8ff"/><rect x="1" y="4" width="3" height="2" fill="#a8a8ff"/><rect x="5" y="4" width="3" height="2" fill="#fff"/><rect x="9" y="4" width="4" height="2" fill="#fff"/><rect x="1" y="7" width="3" height="2" fill="#a8a8ff"/><rect x="5" y="7" width="3" height="2" fill="#fff"/><rect x="9" y="7" width="4" height="2" fill="#fff"/><rect x="1" y="10" width="3" height="3" fill="#a8a8ff"/><rect x="5" y="10" width="3" height="3" fill="#fff"/><rect x="9" y="10" width="4" height="3" fill="#fff"/><rect x="8" y="3" width="1" height="10" fill="#000"/><rect x="5" y="6" width="8" height="1" fill="#000"/><rect x="5" y="9" width="8" height="1" fill="#000"/></svg>
<span style="top:512.19px;font-size:11px;letter-spacing:-0.280px;left:80.40px;">FN2262 - Borderline VCT Modifier</span>
<div style="left:36px;top:536px;width:4px;height:1px;background:repeating-linear-gradient(90deg,#808080 0,#808080 1px,transparent 1px,transparent 2px)"></div>
<div style="left:26px;top:532px;width:9px;height:9px;background:linear-gradient(135deg,#fff 30%,#e2e2e2);border:1px solid #9b9b9b;border-radius:1px"></div>
<div style="left:28px;top:536px;width:5px;height:1px;background:#3f4f66"></div>
<div style="left:30px;top:534px;width:1px;height:5px;background:#3f4f66"></div>
<svg style="left:41px;top:531px" width="11" height="11" viewBox="0 0 11 11"><path d="M.5 1.500L1.500.5h3l1 1h5v9H.5z" fill="#fafa80" stroke="#000"/></svg>
<span style="top:528.19px;font-size:11px;letter-spacing:-0.359px;left:61.30px;">Lugging</span>
<div style="left:36px;top:552px;width:4px;height:1px;background:repeating-linear-gradient(90deg,#808080 0,#808080 1px,transparent 1px,transparent 2px)"></div>
<div style="left:26px;top:548px;width:9px;height:9px;background:linear-gradient(135deg,#fff 30%,#e2e2e2);border:1px solid #9b9b9b;border-radius:1px"></div>
<div style="left:28px;top:552px;width:5px;height:1px;background:#3f4f66"></div>
<div style="left:30px;top:550px;width:1px;height:5px;background:#3f4f66"></div>
<svg style="left:41px;top:547px" width="11" height="11" viewBox="0 0 11 11"><path d="M.5 1.500L1.500.5h3l1 1h5v9H.5z" fill="#fafa80" stroke="#000"/></svg>
<span style="top:544.19px;font-size:11px;letter-spacing:-0.131px;left:61.30px;">Dashpot</span>
<div style="left:36px;top:568px;width:4px;height:1px;background:repeating-linear-gradient(90deg,#808080 0,#808080 1px,transparent 1px,transparent 2px)"></div>
<div style="left:26px;top:564px;width:9px;height:9px;background:linear-gradient(135deg,#fff 30%,#e2e2e2);border:1px solid #9b9b9b;border-radius:1px"></div>
<div style="left:28px;top:568px;width:5px;height:1px;background:#3f4f66"></div>
<div style="left:30px;top:566px;width:1px;height:5px;background:#3f4f66"></div>
<svg style="left:41px;top:563px" width="11" height="11" viewBox="0 0 11 11"><path d="M.5 1.500L1.500.5h3l1 1h5v9H.5z" fill="#fafa80" stroke="#000"/></svg>
<span style="top:560.19px;font-size:11px;letter-spacing:0.016px;left:61.30px;">Tip-In</span>
<div style="left:36px;top:584px;width:4px;height:1px;background:repeating-linear-gradient(90deg,#808080 0,#808080 1px,transparent 1px,transparent 2px)"></div>
<div style="left:26px;top:580px;width:9px;height:9px;background:linear-gradient(135deg,#fff 30%,#e2e2e2);border:1px solid #9b9b9b;border-radius:1px"></div>
<div style="left:28px;top:584px;width:5px;height:1px;background:#3f4f66"></div>
<div style="left:30px;top:582px;width:1px;height:5px;background:#3f4f66"></div>
<svg style="left:41px;top:579px" width="11" height="11" viewBox="0 0 11 11"><path d="M.5 1.500L1.500.5h3l1 1h5v9H.5z" fill="#fafa80" stroke="#000"/></svg>
<span style="top:576.19px;font-size:11px;letter-spacing:-0.110px;left:61.30px;">Engine Temperature</span>
<div style="left:36px;top:600px;width:4px;height:1px;background:repeating-linear-gradient(90deg,#808080 0,#808080 1px,transparent 1px,transparent 2px)"></div>
<div style="left:26px;top:596px;width:9px;height:9px;background:linear-gradient(135deg,#fff 30%,#e2e2e2);border:1px solid #9b9b9b;border-radius:1px"></div>
<div style="left:28px;top:600px;width:5px;height:1px;background:#3f4f66"></div>
<div style="left:30px;top:598px;width:1px;height:5px;background:#3f4f66"></div>
<svg style="left:41px;top:595px" width="11" height="11" viewBox="0 0 11 11"><path d="M.5 1.500L1.500.5h3l1 1h5v9H.5z" fill="#fafa80" stroke="#000"/></svg>
<span style="top:592.19px;font-size:11px;letter-spacing:-0.386px;left:61.30px;">Base Spark</span>
<div style="left:36px;top:616px;width:4px;height:1px;background:repeating-linear-gradient(90deg,#808080 0,#808080 1px,transparent 1px,transparent 2px)"></div>
<div style="left:26px;top:612px;width:9px;height:9px;background:linear-gradient(135deg,#fff 30%,#e2e2e2);border:1px solid #9b9b9b;border-radius:1px"></div>
<div style="left:28px;top:616px;width:5px;height:1px;background:#3f4f66"></div>
<div style="left:30px;top:614px;width:1px;height:5px;background:#3f4f66"></div>
<svg style="left:41px;top:611px" width="11" height="11" viewBox="0 0 11 11"><path d="M.5 1.500L1.500.5h3l1 1h5v9H.5z" fill="#fafa80" stroke="#000"/></svg>
<span style="top:608.19px;font-size:11px;letter-spacing:-0.353px;left:61.30px;">Idle FBS Spark</span>
<div style="left:36px;top:632px;width:4px;height:1px;background:repeating-linear-gradient(90deg,#808080 0,#808080 1px,transparent 1px,transparent 2px)"></div>
<div style="left:26px;top:628px;width:9px;height:9px;background:linear-gradient(135deg,#fff 30%,#e2e2e2);border:1px solid #9b9b9b;border-radius:1px"></div>
<div style="left:28px;top:632px;width:5px;height:1px;background:#3f4f66"></div>
<svg style="left:41px;top:627px" width="16" height="12" viewBox="0 0 16 12"><path d="M.5 10.500v-9L1.500.5h4l1 1.500h5v3" fill="#fafa78" stroke="#000"/><path d="M.5 10.500L4 5h11.500L11 10.500z" fill="#d8d830" stroke="#000"/></svg>
<span style="top:624.19px;font-size:11px;letter-spacing:-0.750px;left:61.30px;">CSSRE Spark</span>
<div style="left:55px;top:648px;width:5px;height:1px;background:repeating-linear-gradient(90deg,#808080 0,#808080 1px,transparent 1px,transparent 2px)"></div>
<div style="left:45px;top:644px;width:9px;height:9px;background:linear-gradient(135deg,#fff 30%,#e2e2e2);border:1px solid #9b9b9b;border-radius:1px"></div>
<div style="left:47px;top:648px;width:5px;height:1px;background:#3f4f66"></div>
<div style="left:49px;top:646px;width:1px;height:5px;background:#3f4f66"></div>
<svg style="left:60px;top:643px" width="11" height="11" viewBox="0 0 11 11"><path d="M.5 1.500L1.500.5h3l1 1h5v9H.5z" fill="#fafa80" stroke="#000"/></svg>
<span style="top:640.19px;font-size:11px;letter-spacing:-0.377px;left:80.40px;">Scaling Normalizer</span>
<div style="left:55px;top:664px;width:5px;height:1px;background:repeating-linear-gradient(90deg,#808080 0,#808080 1px,transparent 1px,transparent 2px)"></div>
<div style="left:45px;top:660px;width:9px;height:9px;background:linear-gradient(135deg,#fff 30%,#e2e2e2);border:1px solid #9b9b9b;border-radius:1px"></div>
<div style="left:47px;top:664px;width:5px;height:1px;background:#3f4f66"></div>
<div style="left:49px;top:662px;width:1px;height:5px;background:#3f4f66"></div>
<svg style="left:60px;top:659px" width="11" height="11" viewBox="0 0 11 11"><path d="M.5 1.500L1.500.5h3l1 1h5v9H.5z" fill="#fafa80" stroke="#000"/></svg>
<span style="top:656.19px;font-size:11px;letter-spacing:-0.379px;left:80.40px;">Console PIDs</span>
<div style="left:51px;top:680px;width:9px;height:1px;background:repeating-linear-gradient(90deg,#808080 0,#808080 1px,transparent 1px,transparent 2px)"></div>
<svg style="left:60px;top:672px" width="17" height="16" viewBox="0 0 17 16"><path d="M.6 1.200l7.400 8.600M8 1.200L.6 9.800" stroke="#e00000" stroke-width="1.900" fill="none"/><path d="M9 6.400l3.500 4.600L16 6.400M12.500 11v4.300" stroke="#0000a8" stroke-width="2" fill="none"/></svg>
<span style="top:672.19px;font-size:11px;letter-spacing:-0.339px;left:81.40px;">~FN741 - Low Load Spark Max Clip (CLLS_AT_PT)</span>
<div style="left:51px;top:696px;width:9px;height:1px;background:repeating-linear-gradient(90deg,#808080 0,#808080 1px,transparent 1px,transparent 2px)"></div>
<svg style="left:61px;top:689px" width="14" height="14" viewBox="0 0 14 14" shape-rendering="crispEdges"><rect width="14" height="14" fill="#00008b"/><rect x="1" y="1" width="3" height="2" fill="#a8a8ff"/><rect x="5" y="1" width="3" height="2" fill="#a8a8ff"/><rect x="9" y="1" width="4" height="2" fill="#a8a8ff"/><rect x="1" y="4" width="3" height="2" fill="#a8a8ff"/><rect x="5" y="4" width="3" height="2" fill="#fff"/><rect x="9" y="4" width="4" height="2" fill="#fff"/><rect x="1" y="7" width="3" height="2" fill="#a8a8ff"/><rect x="5" y="7" width="3" height="2" fill="#fff"/><rect x="9" y="7" width="4" height="2" fill="#fff"/><rect x="1" y="10" width="3" height="3" fill="#a8a8ff"/><rect x="5" y="10" width="3" height="3" fill="#fff"/><rect x="9" y="10" width="4" height="3" fill="#fff"/><rect x="8" y="3" width="1" height="10" fill="#000"/><rect x="5" y="6" width="8" height="1" fill="#000"/><rect x="5" y="9" width="8" height="1" fill="#000"/></svg>
<span style="top:688.19px;font-size:11px;letter-spacing:-0.165px;left:81.40px;">~FN2000D - Cold Low Load Adder / Startup Max Spark Advance Clip (FN2000)</span>
<div style="left:51px;top:712px;width:9px;height:1px;background:repeating-linear-gradient(90deg,#808080 0,#808080 1px,transparent 1px,transparent 2px)"></div>
<svg style="left:61px;top:705px" width="14" height="14" viewBox="0 0 14 14" shape-rendering="crispEdges"><rect width="14" height="14" fill="#00008b"/><rect x="1" y="1" width="3" height="2" fill="#a8a8ff"/><rect x="5" y="1" width="3" height="2" fill="#a8a8ff"/><rect x="9" y="1" width="4" height="2" fill="#a8a8ff"/><rect x="1" y="4" width="3" height="2" fill="#a8a8ff"/><rect x="5" y="4" width="3" height="2" fill="#fff"/><rect x="9" y="4" width="4" height="2" fill="#fff"/><rect x="1" y="7" width="3" height="2" fill="#a8a8ff"/><rect x="5" y="7" width="3" height="2" fill="#fff"/><rect x="9" y="7" width="4" height="2" fill="#fff"/><rect x="1" y="10" width="3" height="3" fill="#a8a8ff"/><rect x="5" y="10" width="3" height="3" fill="#fff"/><rect x="9" y="10" width="4" height="3" fill="#fff"/><rect x="8" y="3" width="1" height="10" fill="#000"/><rect x="5" y="6" width="8" height="1" fill="#000"/><rect x="5" y="9" width="8" height="1" fill="#000"/></svg>
<span style="top:704.19px;font-size:11px;letter-spacing:-0.197px;left:81.40px;">~FN2001A - Cold Low Load Spark Adder (FN2001)</span>
<div style="left:51px;top:728px;width:9px;height:1px;background:repeating-linear-gradient(90deg,#808080 0,#808080 1px,transparent 1px,transparent 2px)"></div>
<svg style="left:61px;top:721px" width="14" height="14" viewBox="0 0 14 14" shape-rendering="crispEdges"><rect width="14" height="14" fill="#00008b"/><rect x="1" y="1" width="3" height="2" fill="#a8a8ff"/><rect x="5" y="1" width="3" height="2" fill="#a8a8ff"/><rect x="9" y="1" width="4" height="2" fill="#a8a8ff"/><rect x="1" y="4" width="3" height="2" fill="#a8a8ff"/><rect x="5" y="4" width="3" height="2" fill="#fff"/><rect x="9" y="4" width="4" height="2" fill="#fff"/><rect x="1" y="7" width="3" height="2" fill="#a8a8ff"/><rect x="5" y="7" width="3" height="2" fill="#fff"/><rect x="9" y="7" width="4" height="2" fill="#fff"/><rect x="1" y="10" width="3" height="3" fill="#a8a8ff"/><rect x="5" y="10" width="3" height="3" fill="#fff"/><rect x="9" y="10" width="4" height="3" fill="#fff"/><rect x="8" y="3" width="1" height="10" fill="#000"/><rect x="5" y="6" width="8" height="1" fill="#000"/><rect x="5" y="9" width="8" height="1" fill="#000"/></svg>
<span style="top:720.19px;font-size:11px;letter-spacing:-0.296px;left:80.40px;">FN2002 - Cold Low Load Spark Adder Cat/TP_REL</span>
<div style="left:51px;top:744px;width:9px;height:1px;background:repeating-linear-gradient(90deg,#808080 0,#808080 1px,transparent 1px,transparent 2px)"></div>
<svg style="left:61px;top:737px" width="14" height="14" viewBox="0 0 14 14" shape-rendering="crispEdges"><rect width="14" height="14" fill="#00008b"/><rect x="1" y="1" width="3" height="2" fill="#a8a8ff"/><rect x="5" y="1" width="3" height="2" fill="#a8a8ff"/><rect x="9" y="1" width="4" height="2" fill="#a8a8ff"/><rect x="1" y="4" width="3" height="2" fill="#a8a8ff"/><rect x="5" y="4" width="3" height="2" fill="#fff"/><rect x="9" y="4" width="4" height="2" fill="#fff"/><rect x="1" y="7" width="3" height="2" fill="#a8a8ff"/><rect x="5" y="7" width="3" height="2" fill="#fff"/><rect x="9" y="7" width="4" height="2" fill="#fff"/><rect x="1" y="10" width="3" height="3" fill="#a8a8ff"/><rect x="5" y="10" width="3" height="3" fill="#fff"/><rect x="9" y="10" width="4" height="3" fill="#fff"/><rect x="8" y="3" width="1" height="10" fill="#000"/><rect x="5" y="6" width="8" height="1" fill="#000"/><rect x="5" y="9" width="8" height="1" fill="#000"/></svg>
<span style="top:736.19px;font-size:11px;letter-spacing:-0.277px;left:80.40px;">FN2000A_PM - Cold Low Load Spark Adder (FN2000A)</span>
<div style="left:51px;top:760px;width:9px;height:1px;background:repeating-linear-gradient(90deg,#808080 0,#808080 1px,transparent 1px,transparent 2px)"></div>
<svg style="left:61px;top:753px" width="14" height="14" viewBox="0 0 14 14" shape-rendering="crispEdges"><rect width="14" height="14" fill="#00008b"/><rect x="1" y="1" width="3" height="2" fill="#a8a8ff"/><rect x="5" y="1" width="3" height="2" fill="#a8a8ff"/><rect x="9" y="1" width="4" height="2" fill="#a8a8ff"/><rect x="1" y="4" width="3" height="2" fill="#a8a8ff"/><rect x="5" y="4" width="3" height="2" fill="#fff"/><rect x="9" y="4" width="4" height="2" fill="#fff"/><rect x="1" y="7" width="3" height="2" fill="#a8a8ff"/><rect x="5" y="7" width="3" height="2" fill="#fff"/><rect x="9" y="7" width="4" height="2" fill="#fff"/><rect x="1" y="10" width="3" height="3" fill="#a8a8ff"/><rect x="5" y="10" width="3" height="3" fill="#fff"/><rect x="9" y="10" width="4" height="3" fill="#fff"/><rect x="8" y="3" width="1" height="10" fill="#000"/><rect x="5" y="6" width="8" height="1" fill="#000"/><rect x="5" y="9" width="8" height="1" fill="#000"/></svg>
<span style="top:752.19px;font-size:11px;letter-spacing:-0.278px;left:80.40px;">FN2001A_PM - Cold Low Load Spark Adder N / Load</span>
<div style="left:51px;top:776px;width:9px;height:1px;background:repeating-linear-gradient(90deg,#808080 0,#808080 1px,transparent 1px,transparent 2px)"></div>
<svg style="left:61px;top:769px" width="14" height="14" viewBox="0 0 14 14" shape-rendering="crispEdges"><rect width="14" height="14" fill="#00008b"/><rect x="1" y="1" width="3" height="2" fill="#a8a8ff"/><rect x="5" y="1" width="3" height="2" fill="#a8a8ff"/><rect x="9" y="1" width="4" height="2" fill="#a8a8ff"/><rect x="1" y="4" width="3" height="2" fill="#a8a8ff"/><rect x="5" y="4" width="3" height="2" fill="#fff"/><rect x="9" y="4" width="4" height="2" fill="#fff"/><rect x="1" y="7" width="3" height="2" fill="#a8a8ff"/><rect x="5" y="7" width="3" height="2" fill="#fff"/><rect x="9" y="7" width="4" height="2" fill="#fff"/><rect x="1" y="10" width="3" height="3" fill="#a8a8ff"/><rect x="5" y="10" width="3" height="3" fill="#fff"/><rect x="9" y="10" width="4" height="3" fill="#fff"/><rect x="8" y="3" width="1" height="10" fill="#000"/><rect x="5" y="6" width="8" height="1" fill="#000"/><rect x="5" y="9" width="8" height="1" fill="#000"/></svg>
<span style="top:768.19px;font-size:11px;letter-spacing:-0.403px;left:80.40px;">FN2002_PM - Cold Low Load Spark Adder TP_REL / EXT_CMD</span>
<div style="left:51px;top:792px;width:9px;height:1px;background:repeating-linear-gradient(90deg,#808080 0,#808080 1px,transparent 1px,transparent 2px)"></div>
<svg style="left:61px;top:786.6px" width="14" height="12" viewBox="0 0 14 12"><path d="M.5 3.500C1.500 1.500 2.500 1.200 4 1.200h9.500" fill="none" stroke="#000" stroke-width="2"/><path d="M5 2v5.500c0 2-1 3-3 3.200" fill="none" stroke="#000" stroke-width="1.900"/><path d="M9.300 2v6.500c0 1.500 1 2.200 3.500 1.600" fill="none" stroke="#000" stroke-width="1.900"/></svg>
<span style="top:784.19px;font-size:11px;letter-spacing:-0.556px;left:80.40px;">CSSR_MAXISC - LOW LOAD ISCDC Max Clip</span>
<div style="left:51px;top:808px;width:9px;height:1px;background:repeating-linear-gradient(90deg,#808080 0,#808080 1px,transparent 1px,transparent 2px)"></div>
<svg style="left:61px;top:802.6px" width="14" height="12" viewBox="0 0 14 12"><path d="M.5 3.500C1.500 1.500 2.500 1.200 4 1.200h9.500" fill="none" stroke="#000" stroke-width="2"/><path d="M5 2v5.500c0 2-1 3-3 3.200" fill="none" stroke="#000" stroke-width="1.900"/><path d="M9.300 2v6.500c0 1.500 1 2.200 3.500 1.600" fill="none" stroke="#000" stroke-width="1.900"/></svg>
<span style="top:800.19px;font-size:11px;letter-spacing:-0.476px;left:80.40px;">CSSR_MN_MVAC - LOW LOAD Manifold Vac Limit</span>
<div style="left:51px;top:824px;width:9px;height:1px;background:repeating-linear-gradient(90deg,#808080 0,#808080 1px,transparent 1px,transparent 2px)"></div>
<svg style="left:61px;top:818.6px" width="14" height="12" viewBox="0 0 14 12"><path d="M.5 3.500C1.500 1.500 2.500 1.200 4 1.200h9.500" fill="none" stroke="#000" stroke-width="2"/><path d="M5 2v5.500c0 2-1 3-3 3.200" fill="none" stroke="#000" stroke-width="1.900"/><path d="M9.300 2v6.500c0 1.500 1 2.200 3.500 1.600" fill="none" stroke="#000" stroke-width="1.900"/></svg>
<span style="top:816.19px;font-size:11px;letter-spacing:-0.618px;left:80.40px;">STAB_LOLD_AM - CSSRE AM Max</span>
<div style="left:51px;top:840px;width:9px;height:1px;background:repeating-linear-gradient(90deg,#808080 0,#808080 1px,transparent 1px,transparent 2px)"></div>
<svg style="left:61px;top:833px" width="14" height="14" viewBox="0 0 14 14"><rect x="0" y="0" width="3" height="1" fill="#808040"/><rect x="1" y="1" width="2" height="13" fill="#000"/><path d="M3 1.500h4.500v3h5v6.500h-5v-3H3z" fill="#f01818" stroke="#000" stroke-width=".8"/><rect x="3" y="2" width="4" height="5.500" fill="#ff2020"/><rect x="7.500" y="5" width="4.500" height="5.500" fill="#ee1818"/></svg>
<span style="top:832.19px;font-size:11px;letter-spacing:-0.352px;left:81.40px;">~CLLS_AT_PT - Stabilized Low Load Spk Clip PT Allowed</span>
<div style="left:36px;top:856px;width:4px;height:1px;background:repeating-linear-gradient(90deg,#808080 0,#808080 1px,transparent 1px,transparent 2px)"></div>
<div style="left:26px;top:852px;width:9px;height:9px;background:linear-gradient(135deg,#fff 30%,#e2e2e2);border:1px solid #9b9b9b;border-radius:1px"></div>
<div style="left:28px;top:856px;width:5px;height:1px;background:#3f4f66"></div>
<div style="left:30px;top:854px;width:1px;height:5px;background:#3f4f66"></div>
<svg style="left:41px;top:851px" width="11" height="11" viewBox="0 0 11 11"><path d="M.5 1.500L1.500.5h3l1 1h5v9H.5z" fill="#fafa80" stroke="#000"/></svg>
<span style="top:848.19px;font-size:11px;letter-spacing:-0.936px;left:61.30px;">WOT</span>
</div>
<div style="left:731px;top:121px;width:589px;height:278px;background:linear-gradient(#c9d6e5 0,#dfe8f2 24px,#e1e9f3 31px);border:1px solid #5c6166;border-radius:7px 7px 1px 1px"></div>
<div style="left:732px;top:122px;width:587px;height:276px;border:1px solid rgba(255,255,255,.55);border-radius:6px 6px 0 0"></div>
<svg style="left:741px;top:134px" width="16" height="12" viewBox="0 0 16 12"><rect x="0" y="2" width="16" height="8" fill="#000"/><rect x="1.00" y="0" width="1.27" height="12" fill="#000"/><rect x="3.55" y="0" width="1.27" height="12" fill="#000"/><rect x="6.09" y="0" width="1.27" height="12" fill="#000"/><rect x="8.64" y="0" width="1.27" height="12" fill="#000"/><rect x="11.18" y="0" width="1.27" height="12" fill="#000"/><rect x="13.73" y="0" width="1.27" height="12" fill="#000"/></svg>
<span style="top:132.24px;font-size:12px;letter-spacing:-0.347px;left:761.50px;color:#9a9ea3;">~FN2300A - MBT Spark (FN1120 / FN1617)</span>
<div style="left:1278px;top:131px;width:32px;height:18px;border:1px solid #8d959f;border-radius:3px;background:linear-gradient(#d5dfeb,#c3d0df 50%,#ccd8e6)"></div>
<svg style="left:1287px;top:135px" width="14" height="10" viewBox="0 0 14 10"><path d="M3.200 1.800l7.600 6.400M10.800 1.800l-7.600 6.400" stroke="#5a6068" stroke-width="3.600" stroke-linecap="square"/><path d="M3.200 1.800l7.600 6.400M10.800 1.800l-7.600 6.400" stroke="#fff" stroke-width="1.900" stroke-linecap="square"/></svg>
<div style="left:740px;top:152px;width:572px;height:239px;background:#f0f0f0"></div>
<div style="left:742px;top:155px;width:1px;height:20px;background:#fff"></div>
<div style="left:743px;top:155px;width:1px;height:20px;background:#a0a0a0"></div>
<svg style="left:752px;top:158px" width="14" height="14" viewBox="0 0 14 14"><path d="M0 0h14v14H1.500L0 12.500z" fill="#4a4a00"/><rect x="3" y="1" width="8" height="6" fill="#fff"/><rect x="3" y="9" width="8" height="5" fill="#8a8a30"/><rect x="8" y="10" width="2" height="3" fill="#fff"/><rect x="1" y="1" width="1" height="11" fill="#8a8a30"/></svg>
<svg style="left:775px;top:159px" width="13" height="13" viewBox="0 0 13 13"><path d="M1.500 1l10 11.500M11.500 1L1.500 12.500" stroke="#e81010" stroke-width="2"/></svg>
<svg style="left:797px;top:158px" width="16" height="14" viewBox="0 0 16 14"><path d="M1 0v13h15" fill="none" stroke="#000" stroke-dasharray="1 1"/><path d="M1.500 6l3 4 2.500-2.500 2 2 2.500-3 2 2.500 2-3.500" fill="none" stroke="#d01020" stroke-width="1.200"/></svg>
<svg style="left:820px;top:157px" width="17" height="16" viewBox="0 0 17 16"><path d="M8.500 0v14M4 15h9M2 3.500c3-1.500 10-1.500 13 0" fill="none" stroke="#000" stroke-width="1.500"/><path d="M0.500 9.500h6l-3-5zM10.500 9.500h6l-3-5z" fill="#d8d840" stroke="#000" stroke-width=".8"/></svg>
<svg style="left:844px;top:157px" width="14" height="16" viewBox="0 0 14 16"><path d="M2 2h10v2H2z" fill="#0000c0"/><path d="M7 1L1.500 14h11z" fill="#fff" stroke="#000" stroke-width="2.200"/><rect x="0" y="13.500" width="14" height="2" fill="#000"/><path d="M3 11.500h8" stroke="#0000c0" stroke-width="1.500"/></svg>
<svg style="left:866px;top:158px" width="16" height="15" viewBox="0 0 16 15"><path d="M2 1l8 10M10 1L2 11" stroke="#000090" stroke-width="2.200"/><path d="M1 14.500h15L9 8.500v4H1z" fill="#e81010"/></svg>
<svg style="left:889px;top:158px" width="16" height="15" viewBox="0 0 16 15"><path d="M1 1l4 5.500L9 1M5 6.500V13" fill="none" stroke="#000090" stroke-width="2.200"/><path d="M11.500 15V4M7.500 6.500l4-5.500 4 5.500z" stroke="#e81010" stroke-width="1.800" fill="#e81010"/></svg>
<span style="top:157.46px;font-size:16px;left:914.50px;color:#a8a8a8;">A</span>
<div style="left:935px;top:155px;width:1px;height:20px;background:#a0a0a0"></div>
<div style="left:936px;top:155px;width:1px;height:20px;background:#fff"></div>
<span style="top:155.89px;font-size:11px;letter-spacing:-0.131px;left:946.60px;">Function:</span>
<div style="left:995px;top:154px;width:93px;height:21px;background:#e1e1e1;border:1px solid #adadad"></div>
<span style="top:156.19px;font-size:11px;letter-spacing:-0.257px;left:998.60px;">Fill w/ Value</span>
<svg style="left:1074px;top:162px" width="10" height="7" viewBox="0 0 10 7"><path d="M1 1l4 4 4-4" fill="none" stroke="#404040" stroke-width="1.200"/></svg>
<span style="top:155.89px;font-size:11px;letter-spacing:-0.455px;left:1093.30px;">Value:</span>
<div style="left:1126px;top:154px;width:48px;height:21px;background:#fff;border:1px solid #7a7a7a"></div>
<span style="top:156.19px;font-size:11px;letter-spacing:-0.274px;left:1132.40px;">1.60</span>
<div style="left:1176px;top:155px;width:49px;height:19px;background:#e1e1e1;border:1px solid #adadad"></div>
<span style="top:156.99px;font-size:11px;letter-spacing:-0.292px;left:1180.70px;">Execute</span>
<div style="left:740px;top:177px;width:571px;height:191px;background:#808080;border:1px solid #a0a0a0;border-right-color:#fff;border-bottom-color:#fff"></div>
<div style="left:741px;top:178px;width:569px;height:189px;border:1px solid #696969;border-right-color:#e3e3e3;border-bottom-color:#e3e3e3"></div>
<div style="left:742px;top:180px;width:568px;height:14px;background:#f0f0f0;border:1px solid #b4b4b4;border-right-color:#8e8e8e;border-bottom-color:#8e8e8e;box-shadow:inset 1px 1px 0 #fff"></div>
<span style="top:180.19px;font-size:11px;transform:scaleX(1.1045);transform-origin:0 0;left:905.00px;font-weight:bold;">~FN2300A – MBT Spark (FN1120 / FN1617)</span>
<div style="left:742px;top:195px;width:551px;height:149px;background:#ece6e6"></div>
<div style="left:742px;top:195px;width:45px;height:149px;background:#fff"></div>
<div style="left:742px;top:195px;width:551px;height:15px;background:#fff"></div>
<div style="left:742px;top:195px;width:45px;height:14px;background:#f0f0f0;border:1px solid #b4b4b4;border-right-color:#8e8e8e;border-bottom-color:#8e8e8e;box-shadow:inset 1px 1px 0 #fff"></div>
<div style="left:787px;top:195px;width:45px;height:14px;background:#f0f0f0;border:1px solid #b4b4b4;border-right-color:#8e8e8e;border-bottom-color:#8e8e8e;box-shadow:inset 1px 1px 0 #fff"></div>
<span style="top:196.13px;font-size:10.6px;left:801.16px;">750</span>
<div style="left:833px;top:195px;width:45px;height:14px;background:#f0f0f0;border:1px solid #b4b4b4;border-right-color:#8e8e8e;border-bottom-color:#8e8e8e;box-shadow:inset 1px 1px 0 #fff"></div>
<span style="top:196.13px;font-size:10.6px;left:844.21px;">1000</span>
<div style="left:879px;top:195px;width:45px;height:14px;background:#f0f0f0;border:1px solid #b4b4b4;border-right-color:#8e8e8e;border-bottom-color:#8e8e8e;box-shadow:inset 1px 1px 0 #fff"></div>
<span style="top:196.13px;font-size:10.6px;left:890.21px;">1250</span>
<div style="left:925px;top:195px;width:45px;height:14px;background:#f0f0f0;border:1px solid #b4b4b4;border-right-color:#8e8e8e;border-bottom-color:#8e8e8e;box-shadow:inset 1px 1px 0 #fff"></div>
<span style="top:196.13px;font-size:10.6px;left:936.21px;">1500</span>
<div style="left:971px;top:195px;width:45px;height:14px;background:#f0f0f0;border:1px solid #b4b4b4;border-right-color:#8e8e8e;border-bottom-color:#8e8e8e;box-shadow:inset 1px 1px 0 #fff"></div>
<span style="top:196.13px;font-size:10.6px;left:982.21px;">1750</span>
<div style="left:1017px;top:195px;width:45px;height:14px;background:#f0f0f0;border:1px solid #b4b4b4;border-right-color:#8e8e8e;border-bottom-color:#8e8e8e;box-shadow:inset 1px 1px 0 #fff"></div>
<span style="top:196.13px;font-size:10.6px;left:1028.21px;">2000</span>
<div style="left:1063px;top:195px;width:45px;height:14px;background:#f0f0f0;border:1px solid #b4b4b4;border-right-color:#8e8e8e;border-bottom-color:#8e8e8e;box-shadow:inset 1px 1px 0 #fff"></div>
<span style="top:196.13px;font-size:10.6px;left:1074.21px;">2250</span>
<div style="left:1109px;top:195px;width:45px;height:14px;background:#dadada;border:1px solid #b4b4b4;border-right-color:#8e8e8e;border-bottom-color:#8e8e8e;box-shadow:inset 1px 1px 0 #fff"></div>
<span style="top:196.13px;font-size:10.6px;left:1120.21px;">3000</span>
<div style="left:1155px;top:195px;width:45px;height:14px;background:#f0f0f0;border:1px solid #b4b4b4;border-right-color:#8e8e8e;border-bottom-color:#8e8e8e;box-shadow:inset 1px 1px 0 #fff"></div>
<span style="top:196.13px;font-size:10.6px;left:1166.21px;">3750</span>
<div style="left:1201px;top:195px;width:45px;height:14px;background:#f0f0f0;border:1px solid #b4b4b4;border-right-color:#8e8e8e;border-bottom-color:#8e8e8e;box-shadow:inset 1px 1px 0 #fff"></div>
<span style="top:196.13px;font-size:10.6px;left:1212.21px;">4500</span>
<div style="left:1247px;top:195px;width:45px;height:14px;background:#f0f0f0;border:1px solid #b4b4b4;border-right-color:#8e8e8e;border-bottom-color:#8e8e8e;box-shadow:inset 1px 1px 0 #fff"></div>
<span style="top:196.13px;font-size:10.6px;left:1258.21px;">5000</span>
<div style="left:742px;top:210px;width:45px;height:14px;background:#f0f0f0;border:1px solid #b4b4b4;border-right-color:#8e8e8e;border-bottom-color:#8e8e8e;box-shadow:inset 1px 1px 0 #fff"></div>
<span style="top:210.33px;font-size:10.6px;left:762.67px;">2.00</span>
<div style="left:787px;top:210px;width:46px;height:15px;background:#8cecf2;box-shadow:inset -1px -1px 0 rgba(255,228,228,.5)"></div>
<span style="top:209.13px;font-size:10.6px;left:809.98px;">4.00</span>
<div style="left:833px;top:210px;width:46px;height:15px;background:#91e8ee;box-shadow:inset -1px -1px 0 rgba(255,228,228,.5)"></div>
<span style="top:209.13px;font-size:10.6px;left:855.98px;">6.00</span>
<div style="left:879px;top:210px;width:46px;height:15px;background:#97e4e9;box-shadow:inset -1px -1px 0 rgba(255,228,228,.5)"></div>
<span style="top:209.13px;font-size:10.6px;left:901.98px;">8.00</span>
<div style="left:925px;top:210px;width:46px;height:15px;background:#a6d8dc;box-shadow:inset -1px -1px 0 rgba(255,228,228,.5)"></div>
<span style="top:209.13px;font-size:10.6px;left:942.08px;">14.00</span>
<div style="left:971px;top:210px;width:46px;height:15px;background:#a9d7d9;box-shadow:inset -1px -1px 0 rgba(255,228,228,.5)"></div>
<span style="top:209.13px;font-size:10.6px;left:988.08px;">15.00</span>
<div style="left:1017px;top:210px;width:46px;height:15px;background:#acd5d7;box-shadow:inset -1px -1px 0 rgba(255,228,228,.5)"></div>
<span style="top:209.13px;font-size:10.6px;left:1034.08px;">16.00</span>
<div style="left:1063px;top:210px;width:46px;height:15px;background:#acd5d7;box-shadow:inset -1px -1px 0 rgba(255,228,228,.5)"></div>
<span style="top:209.13px;font-size:10.6px;left:1080.08px;">16.00</span>
<div style="left:1109px;top:210px;width:46px;height:15px;background:#acd5d7;box-shadow:inset -1px -1px 0 rgba(255,228,228,.5)"></div>
<span style="top:209.13px;font-size:10.6px;left:1126.08px;">16.00</span>
<div style="left:1155px;top:210px;width:46px;height:15px;background:#a9d7d9;box-shadow:inset -1px -1px 0 rgba(255,228,228,.5)"></div>
<span style="top:209.13px;font-size:10.6px;left:1172.08px;">15.00</span>
<div style="left:1201px;top:210px;width:46px;height:15px;background:#a9d7d9;box-shadow:inset -1px -1px 0 rgba(255,228,228,.5)"></div>
<span style="top:209.13px;font-size:10.6px;left:1218.08px;">15.00</span>
<div style="left:1247px;top:210px;width:46px;height:15px;background:#a9d7d9;box-shadow:inset -1px -1px 0 rgba(255,228,228,.5)"></div>
<span style="top:209.13px;font-size:10.6px;left:1264.08px;">15.00</span>
<div style="left:742px;top:225px;width:45px;height:14px;background:#f0f0f0;border:1px solid #b4b4b4;border-right-color:#8e8e8e;border-bottom-color:#8e8e8e;box-shadow:inset 1px 1px 0 #fff"></div>
<span style="top:225.33px;font-size:10.6px;left:762.67px;">1.70</span>
<div style="left:787px;top:225px;width:46px;height:15px;background:#91e8ee;box-shadow:inset -1px -1px 0 rgba(255,228,228,.5)"></div>
<span style="top:224.13px;font-size:10.6px;left:809.98px;">6.00</span>
<div style="left:833px;top:225px;width:46px;height:15px;background:#97e4e9;box-shadow:inset -1px -1px 0 rgba(255,228,228,.5)"></div>
<span style="top:224.13px;font-size:10.6px;left:855.98px;">8.00</span>
<div style="left:879px;top:225px;width:46px;height:15px;background:#9ce0e5;box-shadow:inset -1px -1px 0 rgba(255,228,228,.5)"></div>
<span style="top:224.13px;font-size:10.6px;left:896.08px;">10.00</span>
<div style="left:925px;top:225px;width:46px;height:15px;background:#a9d7d9;box-shadow:inset -1px -1px 0 rgba(255,228,228,.5)"></div>
<span style="top:224.13px;font-size:10.6px;left:942.08px;">15.00</span>
<div style="left:971px;top:225px;width:46px;height:15px;background:#acd5d7;box-shadow:inset -1px -1px 0 rgba(255,228,228,.5)"></div>
<span style="top:224.13px;font-size:10.6px;left:988.08px;">16.00</span>
<div style="left:1017px;top:225px;width:46px;height:15px;background:#aed3d5;box-shadow:inset -1px -1px 0 rgba(255,228,228,.5)"></div>
<span style="top:224.13px;font-size:10.6px;left:1034.08px;">17.00</span>
<div style="left:1063px;top:225px;width:46px;height:15px;background:#aed3d5;box-shadow:inset -1px -1px 0 rgba(255,228,228,.5)"></div>
<span style="top:224.13px;font-size:10.6px;left:1080.08px;">17.00</span>
<div style="left:1109px;top:225px;width:46px;height:15px;background:#acd5d7;box-shadow:inset -1px -1px 0 rgba(255,228,228,.5)"></div>
<span style="top:224.13px;font-size:10.6px;left:1126.08px;">16.00</span>
<div style="left:1155px;top:225px;width:46px;height:15px;background:#acd5d7;box-shadow:inset -1px -1px 0 rgba(255,228,228,.5)"></div>
<span style="top:224.13px;font-size:10.6px;left:1172.08px;">16.00</span>
<div style="left:1201px;top:225px;width:46px;height:15px;background:#acd5d7;box-shadow:inset -1px -1px 0 rgba(255,228,228,.5)"></div>
<span style="top:224.13px;font-size:10.6px;left:1218.08px;">16.00</span>
<div style="left:1247px;top:225px;width:46px;height:15px;background:#acd5d7;box-shadow:inset -1px -1px 0 rgba(255,228,228,.5)"></div>
<span style="top:224.13px;font-size:10.6px;left:1264.08px;">16.00</span>
<div style="left:742px;top:240px;width:45px;height:14px;background:#f0f0f0;border:1px solid #b4b4b4;border-right-color:#8e8e8e;border-bottom-color:#8e8e8e;box-shadow:inset 1px 1px 0 #fff"></div>
<span style="top:240.33px;font-size:10.6px;left:762.67px;">1.30</span>
<div style="left:787px;top:240px;width:46px;height:15px;background:#97e4e9;box-shadow:inset -1px -1px 0 rgba(255,228,228,.5)"></div>
<span style="top:239.13px;font-size:10.6px;left:809.98px;">8.00</span>
<div style="left:833px;top:240px;width:46px;height:15px;background:#9ce0e5;box-shadow:inset -1px -1px 0 rgba(255,228,228,.5)"></div>
<span style="top:239.13px;font-size:10.6px;left:850.08px;">10.00</span>
<div style="left:879px;top:240px;width:46px;height:15px;background:#a1dce0;box-shadow:inset -1px -1px 0 rgba(255,228,228,.5)"></div>
<span style="top:239.13px;font-size:10.6px;left:896.08px;">12.00</span>
<div style="left:925px;top:240px;width:46px;height:15px;background:#acd5d7;box-shadow:inset -1px -1px 0 rgba(255,228,228,.5)"></div>
<span style="top:239.13px;font-size:10.6px;left:942.08px;">16.00</span>
<div style="left:971px;top:240px;width:46px;height:15px;background:#aed3d5;box-shadow:inset -1px -1px 0 rgba(255,228,228,.5)"></div>
<span style="top:239.13px;font-size:10.6px;left:988.08px;">17.00</span>
<div style="left:1017px;top:240px;width:46px;height:15px;background:#b1d1d3;box-shadow:inset -1px -1px 0 rgba(255,228,228,.5)"></div>
<span style="top:239.13px;font-size:10.6px;left:1034.08px;">18.00</span>
<div style="left:1063px;top:240px;width:46px;height:15px;background:#b1d1d3;box-shadow:inset -1px -1px 0 rgba(255,228,228,.5)"></div>
<span style="top:239.13px;font-size:10.6px;left:1080.08px;">18.00</span>
<div style="left:1109px;top:240px;width:46px;height:15px;background:#b1d1d3;box-shadow:inset -1px -1px 0 rgba(255,228,228,.5)"></div>
<span style="top:239.13px;font-size:10.6px;left:1126.08px;">18.00</span>
<div style="left:1155px;top:240px;width:46px;height:15px;background:#b1d1d3;box-shadow:inset -1px -1px 0 rgba(255,228,228,.5)"></div>
<span style="top:239.13px;font-size:10.6px;left:1172.08px;">18.00</span>
<div style="left:1201px;top:240px;width:46px;height:15px;background:#b1d1d3;box-shadow:inset -1px -1px 0 rgba(255,228,228,.5)"></div>
<span style="top:239.13px;font-size:10.6px;left:1218.08px;">18.00</span>
<div style="left:1247px;top:240px;width:46px;height:15px;background:#b1d1d3;box-shadow:inset -1px -1px 0 rgba(255,228,228,.5)"></div>
<span style="top:239.13px;font-size:10.6px;left:1264.08px;">18.00</span>
<div style="left:742px;top:255px;width:45px;height:14px;background:#f0f0f0;border:1px solid #b4b4b4;border-right-color:#8e8e8e;border-bottom-color:#8e8e8e;box-shadow:inset 1px 1px 0 #fff"></div>
<span style="top:255.33px;font-size:10.6px;left:762.67px;">1.10</span>
<div style="left:787px;top:255px;width:46px;height:15px;background:#9ce0e5;box-shadow:inset -1px -1px 0 rgba(255,228,228,.5)"></div>
<span style="top:254.13px;font-size:10.6px;left:804.08px;">10.00</span>
<div style="left:833px;top:255px;width:46px;height:15px;background:#a1dce0;box-shadow:inset -1px -1px 0 rgba(255,228,228,.5)"></div>
<span style="top:254.13px;font-size:10.6px;left:850.08px;">12.00</span>
<div style="left:879px;top:255px;width:46px;height:15px;background:#a6d8dc;box-shadow:inset -1px -1px 0 rgba(255,228,228,.5)"></div>
<span style="top:254.13px;font-size:10.6px;left:896.08px;">14.00</span>
<div style="left:925px;top:255px;width:46px;height:15px;background:#aed3d5;box-shadow:inset -1px -1px 0 rgba(255,228,228,.5)"></div>
<span style="top:254.13px;font-size:10.6px;left:942.08px;">17.00</span>
<div style="left:971px;top:255px;width:46px;height:15px;background:#b1d1d3;box-shadow:inset -1px -1px 0 rgba(255,228,228,.5)"></div>
<span style="top:254.13px;font-size:10.6px;left:988.08px;">18.00</span>
<div style="left:1017px;top:255px;width:46px;height:15px;background:#b4cfd0;box-shadow:inset -1px -1px 0 rgba(255,228,228,.5)"></div>
<span style="top:254.13px;font-size:10.6px;left:1034.08px;">19.00</span>
<div style="left:1063px;top:255px;width:46px;height:15px;background:#b9cbcc;box-shadow:inset -1px -1px 0 rgba(255,228,228,.5)"></div>
<span style="top:254.13px;font-size:10.6px;left:1080.08px;">21.00</span>
<div style="left:1109px;top:255px;width:46px;height:15px;background:#bec7c7;box-shadow:inset -1px -1px 0 rgba(255,228,228,.5)"></div>
<span style="top:254.13px;font-size:10.6px;left:1126.08px;">23.00</span>
<div style="left:1155px;top:255px;width:46px;height:15px;background:#bbc9ca;box-shadow:inset -1px -1px 0 rgba(255,228,228,.5)"></div>
<span style="top:254.13px;font-size:10.6px;left:1172.08px;">22.00</span>
<div style="left:1201px;top:255px;width:46px;height:15px;background:#bbc9ca;box-shadow:inset -1px -1px 0 rgba(255,228,228,.5)"></div>
<span style="top:254.13px;font-size:10.6px;left:1218.08px;">22.00</span>
<div style="left:1247px;top:255px;width:46px;height:15px;background:#bbc9ca;box-shadow:inset -1px -1px 0 rgba(255,228,228,.5)"></div>
<span style="top:254.13px;font-size:10.6px;left:1264.08px;">22.00</span>
<div style="left:742px;top:270px;width:45px;height:14px;background:#f0f0f0;border:1px solid #b4b4b4;border-right-color:#8e8e8e;border-bottom-color:#8e8e8e;box-shadow:inset 1px 1px 0 #fff"></div>
<span style="top:270.33px;font-size:10.6px;left:762.67px;">0.90</span>
<div style="left:787px;top:270px;width:46px;height:15px;background:#9edee2;box-shadow:inset -1px -1px 0 rgba(255,228,228,.5)"></div>
<span style="top:269.13px;font-size:10.6px;left:804.87px;">11.00</span>
<div style="left:833px;top:270px;width:46px;height:15px;background:#a6d8dc;box-shadow:inset -1px -1px 0 rgba(255,228,228,.5)"></div>
<span style="top:269.13px;font-size:10.6px;left:850.08px;">14.00</span>
<div style="left:879px;top:270px;width:46px;height:15px;background:#acd5d7;box-shadow:inset -1px -1px 0 rgba(255,228,228,.5)"></div>
<span style="top:269.13px;font-size:10.6px;left:896.08px;">16.00</span>
<div style="left:925px;top:270px;width:46px;height:15px;background:#b4cfd0;box-shadow:inset -1px -1px 0 rgba(255,228,228,.5)"></div>
<span style="top:269.13px;font-size:10.6px;left:942.08px;">19.00</span>
<div style="left:971px;top:270px;width:46px;height:15px;background:#b6cdce;box-shadow:inset -1px -1px 0 rgba(255,228,228,.5)"></div>
<span style="top:269.13px;font-size:10.6px;left:988.08px;">20.00</span>
<div style="left:1017px;top:270px;width:46px;height:15px;background:#b9cbcc;box-shadow:inset -1px -1px 0 rgba(255,228,228,.5)"></div>
<span style="top:269.13px;font-size:10.6px;left:1034.08px;">21.00</span>
<div style="left:1063px;top:270px;width:46px;height:15px;background:#bec7c7;box-shadow:inset -1px -1px 0 rgba(255,228,228,.5)"></div>
<span style="top:269.13px;font-size:10.6px;left:1080.08px;">23.00</span>
<div style="left:1109px;top:270px;width:46px;height:15px;background:#c3c2c2;box-shadow:inset -1px -1px 0 rgba(255,228,228,.5)"></div>
<span style="top:269.13px;font-size:10.6px;left:1126.08px;">25.00</span>
<div style="left:1155px;top:270px;width:46px;height:15px;background:#c3c2c2;box-shadow:inset -1px -1px 0 rgba(255,228,228,.5)"></div>
<span style="top:269.13px;font-size:10.6px;left:1172.08px;">25.00</span>
<div style="left:1201px;top:270px;width:46px;height:15px;background:#c3c2c2;box-shadow:inset -1px -1px 0 rgba(255,228,228,.5)"></div>
<span style="top:269.13px;font-size:10.6px;left:1218.08px;">25.00</span>
<div style="left:1247px;top:270px;width:46px;height:15px;background:#c3c2c2;box-shadow:inset -1px -1px 0 rgba(255,228,228,.5)"></div>
<span style="top:269.13px;font-size:10.6px;left:1264.08px;">25.00</span>
<div style="left:742px;top:285px;width:45px;height:14px;background:#f0f0f0;border:1px solid #b4b4b4;border-right-color:#8e8e8e;border-bottom-color:#8e8e8e;box-shadow:inset 1px 1px 0 #fff"></div>
<span style="top:285.33px;font-size:10.6px;left:762.67px;">0.70</span>
<div style="left:787px;top:285px;width:46px;height:15px;background:#9edee2;box-shadow:inset -1px -1px 0 rgba(255,228,228,.5)"></div>
<span style="top:284.13px;font-size:10.6px;left:804.87px;">11.00</span>
<div style="left:833px;top:285px;width:46px;height:15px;background:#acd5d7;box-shadow:inset -1px -1px 0 rgba(255,228,228,.5)"></div>
<span style="top:284.13px;font-size:10.6px;left:850.08px;">16.00</span>
<div style="left:879px;top:285px;width:46px;height:15px;background:#acd5d7;box-shadow:inset -1px -1px 0 rgba(255,228,228,.5)"></div>
<span style="top:284.13px;font-size:10.6px;left:896.08px;">16.00</span>
<div style="left:925px;top:285px;width:46px;height:15px;background:#b6cdce;box-shadow:inset -1px -1px 0 rgba(255,228,228,.5)"></div>
<span style="top:284.13px;font-size:10.6px;left:942.08px;">20.00</span>
<div style="left:971px;top:285px;width:46px;height:15px;background:#bbc9ca;box-shadow:inset -1px -1px 0 rgba(255,228,228,.5)"></div>
<span style="top:284.13px;font-size:10.6px;left:988.08px;">22.00</span>
<div style="left:1017px;top:285px;width:46px;height:15px;background:#c2c4c4;box-shadow:inset -1px -1px 0 rgba(255,228,228,.5)"></div>
<span style="top:284.13px;font-size:10.6px;left:1034.08px;">24.50</span>
<div style="left:1063px;top:285px;width:46px;height:15px;background:#c3c2c2;box-shadow:inset -1px -1px 0 rgba(255,228,228,.5)"></div>
<span style="top:284.13px;font-size:10.6px;left:1080.08px;">25.00</span>
<div style="left:1109px;top:285px;width:46px;height:15px;background:#c5bfbf;box-shadow:inset -1px -1px 0 rgba(255,228,228,.5)"></div>
<span style="top:284.13px;font-size:10.6px;left:1126.08px;">26.00</span>
<div style="left:1155px;top:285px;width:46px;height:15px;background:#c5bfbf;box-shadow:inset -1px -1px 0 rgba(255,228,228,.5)"></div>
<span style="top:284.13px;font-size:10.6px;left:1172.08px;">26.00</span>
<div style="left:1201px;top:285px;width:46px;height:15px;background:#c5bfbf;box-shadow:inset -1px -1px 0 rgba(255,228,228,.5)"></div>
<span style="top:284.13px;font-size:10.6px;left:1218.08px;">26.00</span>
<div style="left:1247px;top:285px;width:46px;height:15px;background:#c5bfbf;box-shadow:inset -1px -1px 0 rgba(255,228,228,.5)"></div>
<span style="top:284.13px;font-size:10.6px;left:1264.08px;">26.00</span>
<div style="left:742px;top:300px;width:45px;height:14px;background:#f0f0f0;border:1px solid #b4b4b4;border-right-color:#8e8e8e;border-bottom-color:#8e8e8e;box-shadow:inset 1px 1px 0 #fff"></div>
<span style="top:300.33px;font-size:10.6px;left:762.67px;">0.50</span>
<div style="left:787px;top:300px;width:46px;height:15px;background:#a4dade;box-shadow:inset -1px -1px 0 rgba(255,228,228,.5)"></div>
<span style="top:299.13px;font-size:10.6px;left:804.08px;">13.00</span>
<div style="left:833px;top:300px;width:46px;height:15px;background:#bbc9ca;box-shadow:inset -1px -1px 0 rgba(255,228,228,.5)"></div>
<span style="top:299.13px;font-size:10.6px;left:850.08px;">22.00</span>
<div style="left:879px;top:300px;width:46px;height:15px;background:#bbc9ca;box-shadow:inset -1px -1px 0 rgba(255,228,228,.5)"></div>
<span style="top:299.13px;font-size:10.6px;left:896.08px;">22.00</span>
<div style="left:925px;top:300px;width:46px;height:15px;background:#bec7c7;box-shadow:inset -1px -1px 0 rgba(255,228,228,.5)"></div>
<span style="top:299.13px;font-size:10.6px;left:942.08px;">23.00</span>
<div style="left:971px;top:300px;width:46px;height:15px;background:#c3c2c2;box-shadow:inset -1px -1px 0 rgba(255,228,228,.5)"></div>
<span style="top:299.13px;font-size:10.6px;left:988.08px;">25.00</span>
<div style="left:1017px;top:300px;width:46px;height:15px;background:#cbb6b6;box-shadow:inset -1px -1px 0 rgba(255,228,228,.5)"></div>
<span style="top:299.13px;font-size:10.6px;left:1034.08px;">29.00</span>
<div style="left:1063px;top:300px;width:46px;height:15px;background:#cbb6b6;box-shadow:inset -1px -1px 0 rgba(255,228,228,.5)"></div>
<span style="top:299.13px;font-size:10.6px;left:1080.08px;">29.00</span>
<div style="left:1109px;top:300px;width:46px;height:15px;background:#cdb2b3;box-shadow:inset -1px -1px 0 rgba(255,228,228,.5)"></div>
<span style="top:299.13px;font-size:10.6px;left:1126.08px;">30.00</span>
<div style="left:1155px;top:300px;width:46px;height:15px;background:#cdb2b3;box-shadow:inset -1px -1px 0 rgba(255,228,228,.5)"></div>
<span style="top:299.13px;font-size:10.6px;left:1172.08px;">30.00</span>
<div style="left:1201px;top:300px;width:46px;height:15px;background:#cdb2b3;box-shadow:inset -1px -1px 0 rgba(255,228,228,.5)"></div>
<span style="top:299.13px;font-size:10.6px;left:1218.08px;">30.00</span>
<div style="left:1247px;top:300px;width:46px;height:15px;background:#cdb2b3;box-shadow:inset -1px -1px 0 rgba(255,228,228,.5)"></div>
<span style="top:299.13px;font-size:10.6px;left:1264.08px;">30.00</span>
<div style="left:742px;top:315px;width:45px;height:14px;background:#f0f0f0;border:1px solid #b4b4b4;border-right-color:#8e8e8e;border-bottom-color:#8e8e8e;box-shadow:inset 1px 1px 0 #fff"></div>
<span style="top:315.33px;font-size:10.6px;left:762.67px;">0.30</span>
<div style="left:787px;top:315px;width:46px;height:15px;background:#b9cbcc;box-shadow:inset -1px -1px 0 rgba(255,228,228,.5)"></div>
<span style="top:314.13px;font-size:10.6px;left:804.08px;">21.00</span>
<div style="left:833px;top:315px;width:46px;height:15px;background:#c5bfbf;box-shadow:inset -1px -1px 0 rgba(255,228,228,.5)"></div>
<span style="top:314.13px;font-size:10.6px;left:850.08px;">26.00</span>
<div style="left:879px;top:315px;width:46px;height:15px;background:#cbb6b6;box-shadow:inset -1px -1px 0 rgba(255,228,228,.5)"></div>
<span style="top:314.13px;font-size:10.6px;left:896.08px;">29.00</span>
<div style="left:925px;top:315px;width:46px;height:15px;background:#d3a9aa;box-shadow:inset -1px -1px 0 rgba(255,228,228,.5)"></div>
<span style="top:314.13px;font-size:10.6px;left:942.08px;">33.00</span>
<div style="left:971px;top:315px;width:46px;height:15px;background:#d8a2a4;box-shadow:inset -1px -1px 0 rgba(255,228,228,.5)"></div>
<span style="top:314.13px;font-size:10.6px;left:988.08px;">35.00</span>
<div style="left:1017px;top:315px;width:46px;height:15px;background:#dc9c9e;box-shadow:inset -1px -1px 0 rgba(255,228,228,.5)"></div>
<span style="top:314.13px;font-size:10.6px;left:1034.08px;">37.00</span>
<div style="left:1063px;top:315px;width:46px;height:15px;background:#e09597;box-shadow:inset -1px -1px 0 rgba(255,228,228,.5)"></div>
<span style="top:314.13px;font-size:10.6px;left:1080.08px;">39.00</span>
<div style="left:1109px;top:315px;width:46px;height:15px;background:#e29294;box-shadow:inset -1px -1px 0 rgba(255,228,228,.5)"></div>
<span style="top:314.13px;font-size:10.6px;left:1126.08px;">40.00</span>
<div style="left:1155px;top:315px;width:46px;height:15px;background:#e29294;box-shadow:inset -1px -1px 0 rgba(255,228,228,.5)"></div>
<span style="top:314.13px;font-size:10.6px;left:1172.08px;">40.00</span>
<div style="left:1201px;top:315px;width:46px;height:15px;background:#e29294;box-shadow:inset -1px -1px 0 rgba(255,228,228,.5)"></div>
<span style="top:314.13px;font-size:10.6px;left:1218.08px;">40.00</span>
<div style="left:1247px;top:315px;width:46px;height:15px;background:#e29294;box-shadow:inset -1px -1px 0 rgba(255,228,228,.5)"></div>
<span style="top:314.13px;font-size:10.6px;left:1264.08px;">40.00</span>
<div style="left:742px;top:330px;width:45px;height:14px;background:#dcdcdc;border:1px solid #b4b4b4;border-right-color:#8e8e8e;border-bottom-color:#8e8e8e;box-shadow:inset 1px 1px 0 #fff"></div>
<span style="top:330.33px;font-size:10.6px;left:762.67px;">0.10</span>
<div style="left:787px;top:330px;width:46px;height:15px;background:#c7bcbc;box-shadow:inset -1px -1px 0 rgba(255,228,228,.5)"></div>
<span style="top:329.13px;font-size:10.6px;left:804.08px;">27.00</span>
<div style="left:833px;top:330px;width:46px;height:15px;background:#cfafb0;box-shadow:inset -1px -1px 0 rgba(255,228,228,.5)"></div>
<span style="top:329.13px;font-size:10.6px;left:850.08px;">31.00</span>
<div style="left:879px;top:330px;width:46px;height:15px;background:#d8a2a4;box-shadow:inset -1px -1px 0 rgba(255,228,228,.5)"></div>
<span style="top:329.13px;font-size:10.6px;left:896.08px;">35.00</span>
<div style="left:925px;top:330px;width:46px;height:15px;background:#de999b;box-shadow:inset -1px -1px 0 rgba(255,228,228,.5)"></div>
<span style="top:329.13px;font-size:10.6px;left:942.08px;">38.00</span>
<div style="left:971px;top:330px;width:46px;height:15px;background:#e19496;box-shadow:inset -1px -1px 0 rgba(255,228,228,.5)"></div>
<span style="top:329.13px;font-size:10.6px;left:988.08px;">39.50</span>
<div style="left:1017px;top:330px;width:46px;height:15px;background:#e68c8e;box-shadow:inset -1px -1px 0 rgba(255,228,228,.5)"></div>
<span style="top:329.13px;font-size:10.6px;left:1034.08px;">42.00</span>
<div style="left:1063px;top:330px;width:46px;height:15px;background:#ec8285;box-shadow:inset -1px -1px 0 rgba(255,228,228,.5)"></div>
<span style="top:329.13px;font-size:10.6px;left:1080.08px;">45.00</span>
<div style="left:1108px;top:329px;width:47px;height:16px;background:#cfa4a6;border:1px solid #000"></div>
<span style="top:329.13px;font-size:10.6px;left:1126.08px;">45.00</span>
<div style="left:1155px;top:330px;width:46px;height:15px;background:#ec8285;box-shadow:inset -1px -1px 0 rgba(255,228,228,.5)"></div>
<span style="top:329.13px;font-size:10.6px;left:1172.08px;">45.00</span>
<div style="left:1201px;top:330px;width:46px;height:15px;background:#ec8285;box-shadow:inset -1px -1px 0 rgba(255,228,228,.5)"></div>
<span style="top:329.13px;font-size:10.6px;left:1218.08px;">45.00</span>
<div style="left:1247px;top:330px;width:46px;height:15px;background:#ec8285;box-shadow:inset -1px -1px 0 rgba(255,228,228,.5)"></div>
<span style="top:329.13px;font-size:10.6px;left:1264.08px;">45.00</span>
<div style="left:813px;top:369px;width:1px;height:22px;background:#d9d9d9"></div>
<div style="left:814px;top:369px;width:1px;height:22px;background:#fff"></div>
<div style="left:888px;top:369px;width:1px;height:22px;background:#d9d9d9"></div>
<div style="left:889px;top:369px;width:1px;height:22px;background:#fff"></div>
<span style="top:372.64px;font-size:12px;letter-spacing:-0.299px;left:893.00px;">Sel Count: 1, Min: 45.000, Max: 45.000, Avg: 45.000</span>
<div style="left:1306px;top:378px;width:2px;height:2px;background:#bfbfbf"></div>
<div style="left:1302px;top:382px;width:2px;height:2px;background:#bfbfbf"></div>
<div style="left:1306px;top:382px;width:2px;height:2px;background:#bfbfbf"></div>
<div style="left:1298px;top:386px;width:2px;height:2px;background:#bfbfbf"></div>
<div style="left:1302px;top:386px;width:2px;height:2px;background:#bfbfbf"></div>
<div style="left:1306px;top:386px;width:2px;height:2px;background:#bfbfbf"></div>
<div style="left:583px;top:441px;width:317px;height:214px;background:linear-gradient(90deg,rgba(255,255,255,.38),rgba(255,255,255,0) 45%),linear-gradient(#9dbade 0,#a9c5e6 8px,#cbdff4 25px,#cbdff4 26px);border:1px solid #1e2630;border-radius:7px 7px 1px 1px"></div>
<div style="left:584px;top:442px;width:315px;height:212px;border:1px solid #e8f4fd;border-bottom-color:#8fdcf7;border-radius:6px 6px 0 0"></div>
<svg style="left:588px;top:449px" width="16" height="11" viewBox="0 0 16 11"><rect x="0" y="2" width="16" height="7" fill="#000"/><rect x="1.00" y="0" width="1.27" height="11" fill="#000"/><rect x="3.55" y="0" width="1.27" height="11" fill="#000"/><rect x="6.09" y="0" width="1.27" height="11" fill="#000"/><rect x="8.64" y="0" width="1.27" height="11" fill="#000"/><rect x="11.18" y="0" width="1.27" height="11" fill="#000"/><rect x="13.73" y="0" width="1.27" height="11" fill="#000"/></svg>
<span style="top:448.14px;font-size:12px;letter-spacing:-0.569px;left:608.30px;">Enable Large FN2200 Table (FN2200_EXT)</span>
<div style="left:863px;top:446px;width:32px;height:18px;border:1px solid #6e2a20;border-radius:3px;background:linear-gradient(#ebb3a4 0,#dd8a76 46%,#c8513a 52%,#d9795f 100%);box-shadow:inset 0 0 0 1px rgba(255,255,255,.35)"></div>
<svg style="left:872px;top:450px" width="14" height="10" viewBox="0 0 14 10"><path d="M3.500 2l7.500 6M11 2l-7.500 6" stroke="#7a3a30" stroke-width="4" stroke-linecap="square"/><path d="M3.500 2l7.500 6M11 2l-7.500 6" stroke="#fff" stroke-width="2.300" stroke-linecap="square"/></svg>
<div style="left:585px;top:467px;width:313px;height:186px;background:#f0f0f0"></div>
<span style="top:471.34px;font-size:12px;letter-spacing:-0.455px;left:618.50px;">Current Data State:</span>
<div style="left:747px;top:470px;width:119px;height:18px;overflow:hidden">
<span style="top:1.34px;font-size:12px;letter-spacing:-0.829px;left:0.30px;">t_2004_MPON_190324b3</span>
</div>
<div style="left:606px;top:487px;width:123px;height:33px;border:1px solid #828282;background:#f0f0f0"></div>
<div style="left:607px;top:488px;width:121px;height:31px;border:1px solid #fff"></div>
<span style="top:489.14px;font-size:12px;letter-spacing:-0.384px;left:616.50px;">Indeterminate: data</span>
<span style="top:502.14px;font-size:12px;letter-spacing:-0.599px;left:627.50px;">does not match.</span>
<div style="left:747px;top:487px;width:119px;height:33px;border:1px solid #828282;background:#f0f0f0"></div>
<div style="left:748px;top:488px;width:117px;height:31px;border:1px solid #fff"></div>
<span style="top:489.14px;font-size:12px;letter-spacing:-0.356px;left:755.50px;">Indeterminate: data</span>
<span style="top:502.14px;font-size:12px;letter-spacing:-0.566px;left:752.50px;">does not match patch</span>
<div style="left:607px;top:523px;width:121px;height:37px;background:#e1e1e1;border:1px solid #adadad;"></div>
<span style="top:534.14px;font-size:12px;letter-spacing:-0.725px;left:638.70px;">Apply Patch</span>
<div style="left:607px;top:569px;width:121px;height:37px;background:#e1e1e1;border:1px solid #adadad;"></div>
<span style="top:580.14px;font-size:12px;letter-spacing:-0.855px;left:632.20px;">Remove Patch</span>
<div style="left:641px;top:624px;width:73px;height:21px;background:#e1e1e1;border:1px solid #adadad;border:2px solid #0078d7"></div>
<span style="top:626.84px;font-size:12px;letter-spacing:-0.883px;left:664.00px;">Apply</span>
<div style="left:739px;top:624px;width:73px;height:21px;background:#e1e1e1;border:1px solid #adadad;"></div>
<span style="top:626.84px;font-size:12px;letter-spacing:-1.032px;left:758.60px;">Cancel</span>
<div style="left:913px;top:626px;width:401px;height:326px;background:#f0f0f0;box-shadow:0 2px 9px 1px rgba(0,0,0,.33)"></div>
<div style="left:913px;top:626px;width:401px;height:30px;background:#fff"></div>
<span style="top:632.84px;font-size:12px;letter-spacing:-0.253px;left:921.50px;color:#999;">Find Items...</span>
<div style="left:1294px;top:633px;width:19px;height:19px;background:#e5e5e5"></div>
<svg style="left:1300px;top:639px" width="8" height="8" viewBox="0 0 8 8"><path d="M1 1l6 6M7 1l-6 6" stroke="#f4f4f4" stroke-width="1"/></svg>
<div style="left:921px;top:662px;width:382px;height:61px;border:1px solid #dcdcdc"></div>
<div style="left:922px;top:663px;width:381px;height:60px;border:1px solid #fff;border-right:0;border-bottom:0"></div>
<div style="left:921px;top:723px;width:383px;height:1px;background:#fff"></div>
<div style="left:1303px;top:662px;width:1px;height:62px;background:#fff"></div>
<span style="top:672.89px;font-size:11px;letter-spacing:-0.402px;left:988.20px;">Find</span>
<div style="left:1015px;top:671px;width:78px;height:21px;background:#e1e1e1;border:1px solid #adadad"></div>
<svg style="left:1079.2px;top:679px" width="10" height="7" viewBox="0 0 10 7"><path d="M1 1l4 4 4-4" fill="none" stroke="#404040" stroke-width="1.200"/></svg>
<span style="top:673.19px;font-size:11px;letter-spacing:-0.115px;left:1019.00px;">A Table</span>
<div style="left:1096px;top:671px;width:201px;height:21px;background:#e1e1e1;border:1px solid #adadad"></div>
<svg style="left:1283.2px;top:679px" width="10" height="7" viewBox="0 0 10 7"><path d="M1 1l4 4 4-4" fill="none" stroke="#404040" stroke-width="1.200"/></svg>
<span style="top:673.19px;font-size:11px;letter-spacing:-0.173px;left:1099.80px;">With This Phrase in the Description</span>
<span style="top:699.19px;font-size:11px;letter-spacing:-0.204px;left:971.40px;">Phrase:</span>
<div style="left:1015px;top:695px;width:281px;height:20px;background:#fff;border:1px solid #7a7a7a"></div>
<span style="top:696.39px;font-size:11px;letter-spacing:-0.147px;left:1020.40px;">borderline</span>
<div style="left:1039px;top:729px;width:73px;height:21px;background:#e1e1e1;border:1px solid #adadad;"></div>
<span style="top:731.59px;font-size:11px;letter-spacing:-0.432px;left:1058.70px;">Search</span>
<div style="left:1115px;top:729px;width:73px;height:21px;background:#e1e1e1;border:1px solid #adadad;"></div>
<span style="top:731.59px;font-size:11px;letter-spacing:-0.606px;left:1137.80px;">Close</span>
<span style="top:756.69px;font-size:11px;letter-spacing:-0.083px;left:921.50px;">Items Found: 8</span>
<div style="left:922px;top:778px;width:381px;height:164px;background:#fff;border:1px solid #7a7a7a"></div>
<span style="top:778.99px;font-size:11px;letter-spacing:-0.339px;left:925.30px;">FN2220 - BDL ECT Multiplier (FN724A)</span>
<span style="top:791.99px;font-size:11px;letter-spacing:-0.189px;left:925.30px;">FN2225 - BDL Retard Octane Bar (FN1122)</span>
<span style="top:804.99px;font-size:11px;letter-spacing:-0.215px;left:926.10px;">~FN2230 - BDL ACT Multiplier (FN725A) (FN1150)</span>
<div style="left:924px;top:819px;width:377px;height:13px;background:#0078d7"></div>
<span style="top:817.99px;font-size:11px;letter-spacing:-0.310px;left:926.10px;color:#fff;">~FN2240C - BDL Lambse Modifier (FN2240B)</span>
<span style="top:830.99px;font-size:11px;letter-spacing:-0.327px;left:925.30px;">FN2205 - BDL Failsafe Cooling</span>
<span style="top:843.99px;font-size:11px;letter-spacing:-0.229px;left:925.30px;">FN2231 (FN725A) - BDL ACT Multiplier (FN2230) (ACT Retard)</span>
<span style="top:856.99px;font-size:11px;letter-spacing:-0.299px;left:926.10px;">~FN2241A - BDL Lambse MFA Multiplier</span>
<span style="top:869.99px;font-size:11px;letter-spacing:-0.277px;left:925.30px;">FN2270 - BDL Ethanol Modifier</span>
</div>
</body></html>
